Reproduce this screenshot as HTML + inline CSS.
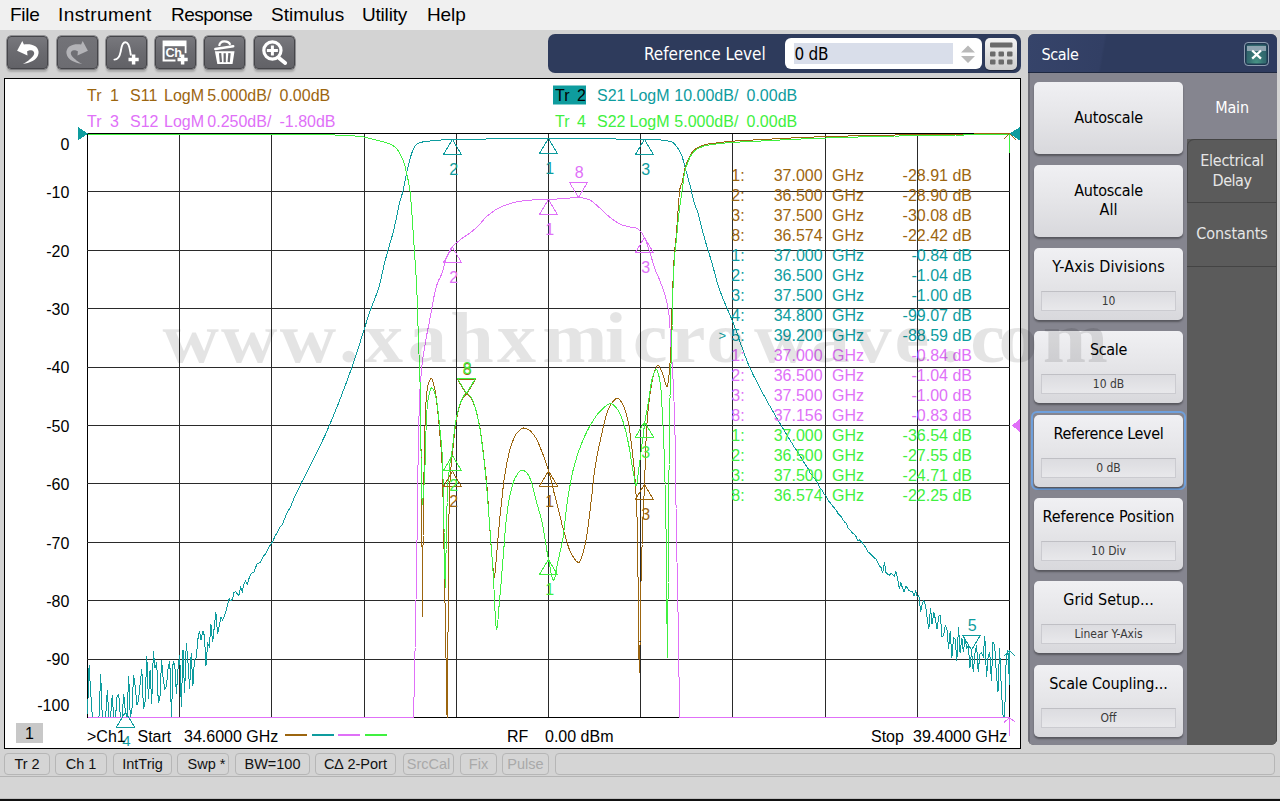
<!DOCTYPE html><html><head><meta charset="utf-8"><title>Network Analyzer</title><style>
html,body{margin:0;padding:0}
body{width:1280px;height:801px;position:relative;overflow:hidden;background:#d3d3d3;font-family:"Liberation Sans",sans-serif;color:#000}
.abs{position:absolute}
#menubar{left:0;top:0;width:1280px;height:30px;background:#f0f0f0}
#menubar span{position:absolute;top:3px;font-size:19px;line-height:24px;white-space:nowrap}
#toolbar{left:0;top:30px;width:1280px;height:48px;background:#d3d3d3}
.tb{position:absolute;top:36px;width:39px;height:31px;border:1px solid #454549;border-radius:4px;background:linear-gradient(#78787d,#6a6a6f 50%,#626267);box-shadow:0 0 0 .5px #55555a,0 3px 2px rgba(0,0,0,.2)}
.tb svg{position:absolute;left:0;top:0}
#refbar{left:548px;top:34px;width:473px;height:39px;border-radius:7px;background:#2e3b5c}
#refbar .lbl{position:absolute;left:96px;top:8.4px;font-family:"DejaVu Sans Condensed","DejaVu Sans","Liberation Sans",sans-serif;font-size:17px;line-height:24px;letter-spacing:-.03px;color:#fff;white-space:nowrap}
#refin{position:absolute;left:237px;top:4px;width:197px;height:31px;border-radius:6px;background:#fff}
#refsel{position:absolute;left:9px;top:5px;width:159px;height:21px;background:#d9deea}
#refin .v{position:absolute;left:9.5px;top:4.2px;font-family:"DejaVu Sans Condensed","DejaVu Sans","Liberation Sans",sans-serif;font-size:17px;line-height:24px;letter-spacing:-.3px;white-space:nowrap}
#keypad{position:absolute;left:437px;top:4px;width:32px;height:32px;border-radius:5px;background:linear-gradient(#f4f4f4,#cdcdcd);box-shadow:0 1px 1px rgba(0,0,0,.4)}
#plotwin{left:4px;top:78px;width:1015px;height:669px;border:1px solid #000;background:#fff}
#panel{left:1028px;top:34px;width:249px;height:711px;border-radius:6px;background:#5b5b5b;overflow:hidden}
#phead{position:absolute;left:0;top:0;width:249px;height:38px;background:linear-gradient(100deg,#36446a 0%,#323f64 30%,#2e3b5e 31%,#2e3b5e 100%);border-bottom:1px solid #1e2840}
#phead .t{position:absolute;left:13.5px;top:9px;font-family:"DejaVu Sans Condensed","DejaVu Sans","Liberation Sans",sans-serif;font-size:16px;line-height:24px;letter-spacing:-.36px;color:#fff}
#pclose{position:absolute;left:216px;top:8px;width:22.5px;height:22px;border:1px solid #8e9bb0;border-radius:4px;background:radial-gradient(ellipse at 50% 100%,#4a9a88 0%,#356f72 45%,#2b5866 100%);box-shadow:inset 0 0 0 1.5px #1f3a52;overflow:hidden}
#pclose:before{content:'';position:absolute;left:2px;top:2.5px;right:2px;height:5.5px;background:#8ea3b0}
#pclose svg{position:absolute;left:0;top:0}
#pbody{position:absolute;left:0;top:38px;width:159px;height:673px;background:#85858f;border-left:2px solid #6d6d76;box-sizing:border-box}
#tabmain{position:absolute;left:159px;top:38px;width:90px;height:67px;background:#85858f}
.tab{position:absolute;left:159px;width:90px;background:#5b5b5b;border-top:1px solid #444;border-right:1px solid #4a4a4a;box-sizing:border-box}
.tabt{position:absolute;left:159px;width:90px;text-align:center;color:#e6e6e6;font-family:"DejaVu Sans Condensed","DejaVu Sans","Liberation Sans",sans-serif;font-size:16px;line-height:20px}
.pb{position:absolute;left:6px;width:149px;height:72px;border-radius:5px;background:linear-gradient(#f0f0f3,#e6e6e9 45%,#d8d8dc);box-shadow:0 2px 2px rgba(0,0,0,.35);font-family:"DejaVu Sans Condensed","DejaVu Sans","Liberation Sans",sans-serif}
.pb .t{position:absolute;left:0;width:149px;text-align:center;font-size:16px;line-height:19px;color:#000;white-space:nowrap}
.pb .s{position:absolute;left:7px;top:43px;width:133px;height:18px;border:1px solid #cbcbd0;border-top-color:#bfbfc4;background:linear-gradient(#dcdce0,#e8e8eb);text-align:center;font-size:12px;line-height:19px;color:#3a3a3a}
#focus{position:absolute;left:3px;top:377px;width:151px;height:75px;border:2px solid #6fa0dc;border-radius:6px}
.sb{position:absolute;top:753px;height:20px;border:1px solid #b6b6b6;border-radius:4px;background:#d5d5d5;font-size:14.5px;line-height:21px;text-align:center;white-space:nowrap;color:#111}
.sb.d{color:#a9a9a9}
#bottom{left:0;top:776px;width:1280px;height:21px;background:#d5d5d5;border-top:1px solid #b4b4b4;border-bottom:1px solid #c0c0c0}
#blk{left:0;top:799px;width:1280px;height:2px;background:#111}
#wm{left:163px;top:297px;font-family:"Liberation Serif",serif;font-weight:bold;font-size:74px;line-height:80px;color:rgba(0,0,0,.1);white-space:nowrap;letter-spacing:4.55px;pointer-events:none}
</style></head><body>
<div id="menubar" class="abs">
<span style="left:10px;letter-spacing:-0.25px">File</span>
<span style="left:58px;letter-spacing:0.40px">Instrument</span>
<span style="left:171px;letter-spacing:-0.55px">Response</span>
<span style="left:271px;letter-spacing:0.05px">Stimulus</span>
<span style="left:362px;letter-spacing:-0.20px">Utility</span>
<span style="left:427px;letter-spacing:-0.10px">Help</span>
</div>
<div id="toolbar" class="abs"></div>
<div class="tb" style="left:7px"><svg width="39" height="31" viewBox="0 0 39 31"><path d="M9.1 13.7 L14.3 3.9 L15.9 7.6 C19 7 24 7 27.7 9.6 C30 11.5 31 14.6 30.5 16.5 C30 20 27.5 22.5 24.6 24 C21.5 25.7 18 26.5 14.8 26.9 C17.5 25.5 20 24 21.5 22.4 C24 20.5 26 18.5 26.2 16.5 C26.3 14.5 25 13.3 23 13.2 C21.5 13.2 20 13.7 19.1 14.2 L19.5 18.5 Z" fill="#fff"/></svg></div>
<div class="tb" style="left:57px;background:linear-gradient(#737378,#6c6c71)"><svg width="39" height="31" viewBox="0 0 39 31"><g transform="translate(39,0) scale(-1,1)"><path d="M9.1 13.7 L14.3 3.9 L15.9 7.6 C19 7 24 7 27.7 9.6 C30 11.5 31 14.6 30.5 16.5 C30 20 27.5 22.5 24.6 24 C21.5 25.7 18 26.5 14.8 26.9 C17.5 25.5 20 24 21.5 22.4 C24 20.5 26 18.5 26.2 16.5 C26.3 14.5 25 13.3 23 13.2 C21.5 13.2 20 13.7 19.1 14.2 L19.5 18.5 Z" fill="#b3b3b7"/></g></svg></div>
<div class="tb" style="left:106px"><svg width="39" height="31" viewBox="0 0 39 31"><path d="M7.4 22.6 C11 22.6 12.6 20 13.7 14.6 C14.3 11 14.8 5.3 18.4 5.3 C22 5.3 22.8 11 23.4 15.4 L23.8 17.8" fill="none" stroke="#fff" stroke-width="1.9" stroke-linecap="round"/><path d="M26.6 17.4v10.1M21.5 22.4h10.2" stroke="#fff" stroke-width="3.5"/></svg></div>
<div class="tb" style="left:155px"><svg width="39" height="31" viewBox="0 0 39 31"><rect x="6.6" y="3.5" width="23.9" height="5.7" fill="#fff"/><path d="M7.6 9v14.4H19.5" fill="none" stroke="#fff" stroke-width="2"/><path d="M29.6 9v7.2" stroke="#fff" stroke-width="1.8"/><text x="9.4" y="20.1" font-family="Liberation Sans,sans-serif" font-weight="bold" font-size="12.6" fill="#fff" letter-spacing="-.3">Ch</text><path d="M26.6 17.4v10.1M21.5 22.4h10.2" stroke="#fff" stroke-width="3.5"/></svg></div>
<div class="tb" style="left:204px"><svg width="39" height="31" viewBox="0 0 39 31"><path d="M14.2 9 C14.6 5.6 17 4.4 19.3 4.4 C22 4.4 24.4 5.4 25.2 7.8" fill="none" stroke="#fff" stroke-width="2.2"/><path d="M10.3 12 L28.2 9.3" stroke="#fff" stroke-width="2.5" stroke-linecap="round"/><path d="M9.9 14.2 H29.5 L27.5 27.1 H12.3 Z" fill="#fff"/><path d="M15.1 16.2 L15.9 25.2 M19.7 16.2 V25.2 M24.5 16.2 L23.7 25.2" stroke="#69696e" stroke-width="2.3"/></svg></div>
<div class="tb" style="left:254px"><svg width="39" height="31" viewBox="0 0 39 31"><circle cx="17.4" cy="13.5" r="8.6" fill="none" stroke="#fff" stroke-width="3.2"/><path d="M17.4 8.4v10.2M11.9 13.5h11" stroke="#fff" stroke-width="3"/><path d="M24 21 L30.2 26" stroke="#fff" stroke-width="3.8" stroke-linecap="round"/></svg></div>
<div id="refbar" class="abs"><div class="lbl">Reference Level</div><div id="refin"><div id="refsel"></div><div class="v">0 dB</div><svg class="abs" style="left:172px;top:5px" width="22" height="22" viewBox="0 0 22 22"><path d="M4 9.5 L11 2.5 L18 9.5Z M4 13 L11 20 L18 13Z" fill="#b9b9b9"/></svg></div><div id="keypad"><svg width="32" height="32" viewBox="0 0 32 32"><g fill="#6b6b6b"><rect x="5" y="4.5" width="22.5" height="5" rx="1"/><rect x="5" y="13.5" width="5.5" height="5" rx="1"/><rect x="13.5" y="13.5" width="5.5" height="5" rx="1"/><rect x="22" y="13.5" width="5.5" height="5" rx="1"/><rect x="5" y="21.5" width="5.5" height="5" rx="1"/><rect x="13.5" y="21.5" width="5.5" height="5" rx="1"/><rect x="22" y="21.5" width="5.5" height="5" rx="1"/></g></svg></div></div>
<div id="plotwin" class="abs"></div>
<svg id="plotsvg" width="1280" height="801" viewBox="0 0 1280 801" style="position:absolute;left:0;top:0" font-family="'Liberation Sans',sans-serif" font-size="16">
<g stroke="#222" stroke-width="1" shape-rendering="crispEdges">
<line x1="87.5" y1="133.0" x2="87.5" y2="718.0" stroke="#000"/>
<line x1="179.5" y1="133.0" x2="179.5" y2="718.0" stroke="#2a2a2a"/>
<line x1="271.5" y1="133.0" x2="271.5" y2="718.0" stroke="#2a2a2a"/>
<line x1="364.5" y1="133.0" x2="364.5" y2="718.0" stroke="#2a2a2a"/>
<line x1="456.5" y1="133.0" x2="456.5" y2="718.0" stroke="#2a2a2a"/>
<line x1="548.5" y1="133.0" x2="548.5" y2="718.0" stroke="#2a2a2a"/>
<line x1="640.5" y1="133.0" x2="640.5" y2="718.0" stroke="#2a2a2a"/>
<line x1="732.5" y1="133.0" x2="732.5" y2="718.0" stroke="#2a2a2a"/>
<line x1="825.5" y1="133.0" x2="825.5" y2="718.0" stroke="#2a2a2a"/>
<line x1="917.5" y1="133.0" x2="917.5" y2="718.0" stroke="#2a2a2a"/>
<line x1="1009.5" y1="133.0" x2="1009.5" y2="718.0" stroke="#000"/>
<line x1="87.0" y1="133.5" x2="1010.0" y2="133.5" stroke="#000"/>
<line x1="87.0" y1="191.5" x2="1010.0" y2="191.5" stroke="#2a2a2a"/>
<line x1="87.0" y1="250.5" x2="1010.0" y2="250.5" stroke="#2a2a2a"/>
<line x1="87.0" y1="308.5" x2="1010.0" y2="308.5" stroke="#2a2a2a"/>
<line x1="87.0" y1="367.5" x2="1010.0" y2="367.5" stroke="#2a2a2a"/>
<line x1="87.0" y1="425.5" x2="1010.0" y2="425.5" stroke="#2a2a2a"/>
<line x1="87.0" y1="483.5" x2="1010.0" y2="483.5" stroke="#2a2a2a"/>
<line x1="87.0" y1="542.5" x2="1010.0" y2="542.5" stroke="#2a2a2a"/>
<line x1="87.0" y1="600.5" x2="1010.0" y2="600.5" stroke="#2a2a2a"/>
<line x1="87.0" y1="659.5" x2="1010.0" y2="659.5" stroke="#2a2a2a"/>
<line x1="87.0" y1="717.5" x2="1010.0" y2="717.5" stroke="#000"/>
</g>
<g fill="#000" text-anchor="end">
<text x="69.3" y="149.7">0</text>
<text x="69.3" y="198.2">-10</text>
<text x="69.3" y="256.6">-20</text>
<text x="69.3" y="315.0">-30</text>
<text x="69.3" y="373.4">-40</text>
<text x="69.3" y="431.8">-50</text>
<text x="69.3" y="490.2">-60</text>
<text x="69.3" y="548.6">-70</text>
<text x="69.3" y="607.0">-80</text>
<text x="69.3" y="665.4">-90</text>
<text x="69.3" y="711.0">-100</text>
</g>
<g shape-rendering="crispEdges">
<polyline points="87.5,134.2 88.5,134.2 89.5,134.2 90.5,134.2 91.5,134.2 92.5,134.2 93.5,134.2 94.5,134.2 95.5,134.2 96.5,134.2 97.5,134.2 98.5,134.2 99.4,134.2 100.4,134.2 101.4,134.2 102.4,134.2 103.4,134.2 104.4,134.2 105.4,134.2 106.4,134.2 107.4,134.2 108.4,134.2 109.4,134.2 110.4,134.2 111.4,134.2 112.4,134.2 113.4,134.2 114.4,134.2 115.4,134.2 116.4,134.2 117.4,134.2 118.4,134.2 119.4,134.2 120.4,134.2 121.3,134.2 122.3,134.2 123.3,134.2 124.3,134.2 125.3,134.2 126.3,134.2 127.3,134.2 128.3,134.2 129.3,134.2 130.3,134.2 131.3,134.2 132.3,134.2 133.3,134.2 134.3,134.2 135.3,134.2 136.3,134.2 137.3,134.2 138.3,134.2 139.3,134.2 140.3,134.2 141.3,134.2 142.3,134.2 143.3,134.2 144.2,134.2 145.2,134.2 146.2,134.2 147.2,134.2 148.2,134.2 149.2,134.2 150.2,134.2 151.2,134.2 152.2,134.2 153.2,134.2 154.2,134.2 155.2,134.2 156.2,134.2 157.2,134.2 158.2,134.2 159.2,134.2 160.2,134.2 161.2,134.2 162.2,134.2 163.2,134.2 164.2,134.2 165.2,134.2 166.2,134.2 167.1,134.2 168.1,134.2 169.1,134.2 170.1,134.2 171.1,134.2 172.1,134.2 173.1,134.2 174.1,134.2 175.1,134.2 176.1,134.2 177.1,134.2 178.1,134.2 179.1,134.2 180.1,134.2 181.1,134.2 182.1,134.2 183.1,134.2 184.1,134.2 185.1,134.2 186.1,134.2 187.1,134.2 188.1,134.2 189.0,134.2 190.0,134.2 191.0,134.2 192.0,134.2 193.0,134.2 194.0,134.2 195.0,134.2 196.0,134.2 197.0,134.2 198.0,134.2 199.0,134.2 200.0,134.2 201.0,134.2 202.0,134.2 203.0,134.2 204.0,134.2 205.0,134.2 206.0,134.2 207.0,134.2 208.0,134.2 209.0,134.2 210.0,134.2 211.0,134.2 212.0,134.2 213.0,134.2 214.0,134.2 215.0,134.2 216.0,134.2 217.0,134.2 218.0,134.2 219.0,134.2 220.0,134.2 221.0,134.2 222.0,134.2 223.0,134.2 224.0,134.2 225.0,134.2 226.0,134.2 227.0,134.2 228.0,134.2 229.0,134.2 230.0,134.2 231.0,134.2 232.0,134.2 233.0,134.2 234.0,134.2 235.0,134.2 236.0,134.2 237.0,134.2 238.0,134.2 239.0,134.2 240.0,134.2 241.0,134.2 242.0,134.2 243.0,134.2 244.0,134.2 245.0,134.2 246.0,134.3 247.0,134.3 248.0,134.3 249.0,134.3 250.0,134.3 251.0,134.3 252.0,134.3 253.0,134.3 254.0,134.3 255.0,134.3 256.0,134.3 257.0,134.3 258.0,134.3 259.0,134.3 260.0,134.3 261.0,134.3 262.0,134.3 263.0,134.3 264.0,134.3 265.0,134.3 266.0,134.3 267.0,134.3 268.0,134.3 269.0,134.3 270.0,134.3 271.0,134.3 272.0,134.3 273.0,134.3 274.0,134.3 275.0,134.3 276.0,134.3 277.0,134.4 278.0,134.4 279.0,134.4 280.0,134.4 281.0,134.4 282.0,134.4 283.0,134.4 284.0,134.4 285.0,134.4 286.0,134.4 287.0,134.4 288.0,134.4 289.0,134.4 290.0,134.4 291.0,134.4 292.0,134.4 293.0,134.4 294.0,134.4 295.0,134.4 296.0,134.4 297.0,134.5 298.0,134.5 299.0,134.5 300.0,134.5 301.0,134.5 302.0,134.5 303.0,134.5 304.0,134.5 305.0,134.5 306.0,134.5 307.0,134.5 308.0,134.5 309.0,134.5 310.0,134.5 311.0,134.5 312.0,134.5 313.0,134.6 314.0,134.6 315.0,134.6 316.0,134.6 317.0,134.6 318.0,134.6 319.0,134.6 320.0,134.6 321.0,134.6 322.0,134.6 323.0,134.6 324.0,134.7 325.0,134.7 326.0,134.7 327.0,134.7 328.0,134.7 329.0,134.8 330.0,134.8 331.0,134.8 332.0,134.9 333.0,134.9 334.0,134.9 335.0,135.0 336.0,135.0 337.0,135.1 338.0,135.1 339.0,135.1 340.0,135.2 341.0,135.2 342.0,135.3 343.0,135.3 344.0,135.4 345.0,135.4 346.0,135.4 347.0,135.5 348.0,135.5 349.0,135.6 350.0,135.6 351.0,135.7 352.0,135.8 353.0,135.8 354.0,135.9 355.0,136.0 356.0,136.0 357.0,136.1 358.0,136.2 359.0,136.3 360.0,136.4 361.0,136.5 362.0,136.7 363.0,136.9 364.0,137.1 365.0,137.3 366.0,137.6 367.0,137.9 368.0,138.1 369.0,138.4 370.0,138.6 371.0,138.8 372.0,139.1 373.0,139.3 374.0,139.5 375.0,139.8 376.0,140.0 377.0,140.2 378.0,140.5 379.0,140.7 380.0,141.0 381.0,141.3 382.0,141.5 383.0,141.8 384.0,142.0 385.0,142.3 386.0,142.6 387.0,142.9 388.0,143.2 389.0,143.6 390.0,144.0 391.0,144.5 392.0,145.0 393.0,145.6 394.0,146.3 395.0,147.1 396.0,148.0 397.0,149.1 398.0,150.6 399.0,152.2 400.0,154.0 401.0,155.9 402.0,157.9 403.0,160.3 404.0,163.0 404.8,165.5 405.5,168.4 406.2,171.6 407.0,175.0 407.5,177.2 408.0,179.5 408.5,181.9 409.0,184.5 409.5,187.5 410.0,191.0 410.2,193.1 410.5,195.6 410.8,198.5 411.0,201.6 411.2,204.8 411.5,208.2 411.8,211.6 412.0,215.0 412.2,217.7 412.4,220.6 412.6,223.5 412.8,226.5 413.0,229.6 413.2,232.7 413.4,235.8 413.6,238.9 413.8,242.0 414.0,245.0 414.2,248.0 414.4,251.0 414.6,253.9 414.8,256.9 415.0,259.9 415.2,262.9 415.4,265.9 415.6,269.0 415.8,271.5 415.9,273.9 416.1,276.4 416.3,279.0 416.4,281.8 416.6,285.0 416.7,287.2 416.8,289.6 416.9,292.2 417.0,294.9 417.1,297.9 417.2,300.9 417.3,304.0 417.4,307.2 417.5,310.4 417.6,313.7 417.7,316.9 417.8,320.0 417.9,323.1 418.0,326.0 418.1,328.9 418.2,331.7 418.3,334.6 418.4,337.5 418.5,340.3 418.6,343.1 418.7,346.0 418.8,348.8 418.9,351.6 419.0,354.4 419.1,357.2 419.2,360.0 419.3,362.7 419.4,365.1 419.5,367.5 419.6,369.9 419.7,372.4 419.8,375.2 419.9,378.4 420.0,382.0 420.0,383.9 420.1,386.1 420.1,388.6 420.2,391.2 420.2,394.0 420.3,397.0 420.3,400.1 420.4,403.3 420.4,406.6 420.5,409.9 420.5,413.3 420.6,416.7 420.6,420.0 420.6,422.6 420.7,425.3 420.7,428.0 420.7,430.8 420.8,433.7 420.8,436.6 420.8,439.6 420.9,442.6 420.9,445.7 421.0,448.7 421.0,451.8 421.0,454.9 421.1,457.9 421.1,461.0 421.1,464.0 421.2,467.0 421.2,470.0 421.2,472.9 421.3,475.7 421.3,478.4 421.3,481.1 421.4,483.7 421.4,486.4 421.4,489.0 421.5,491.7 421.5,494.4 421.6,497.1 421.6,500.0 421.6,503.0 421.7,506.0 421.7,509.3 421.7,512.7 421.8,516.2 421.8,520.0 421.8,522.1 421.8,524.6 421.9,527.2 421.9,530.1 421.9,533.2 421.9,536.5 421.9,539.9 421.9,543.5 422.0,547.2 422.0,551.0 422.0,554.9 422.0,558.9 422.0,562.8 422.1,566.8 422.1,570.8 422.1,574.8 422.1,578.7 422.1,582.5 422.1,586.3 422.2,589.9 422.2,593.4 422.2,596.7 422.2,599.9 422.2,602.9 422.3,605.6 422.3,608.1 422.3,610.3 422.3,612.3 422.3,613.9 422.3,615.2 422.4,616.2 422.4,616.8 422.4,617.0 422.4,616.7 422.4,616.0 422.5,614.8 422.5,613.2 422.5,611.2 422.5,608.9 422.6,606.2 422.6,603.3 422.6,600.1 422.6,596.7 422.7,593.1 422.7,589.3 422.7,585.5 422.7,581.5 422.7,577.5 422.8,573.5 422.8,569.5 422.8,565.6 422.8,561.7 422.9,558.0 422.9,554.4 422.9,551.0 422.9,547.9 423.0,544.9 423.0,542.3 423.0,540.0 423.0,536.2 423.1,532.4 423.1,528.8 423.2,525.2 423.2,521.7 423.2,518.3 423.3,515.0 423.3,511.7 423.4,508.6 423.4,505.5 423.5,502.5 423.5,499.5 423.5,496.7 423.6,493.9 423.6,491.2 423.7,488.5 423.7,486.0 423.8,483.5 423.8,481.1 423.8,478.7 423.9,476.4 423.9,474.2 424.0,472.1 424.0,470.0 424.1,466.0 424.2,462.0 424.2,458.1 424.3,454.3 424.4,450.5 424.5,446.8 424.6,443.2 424.7,439.7 424.7,436.3 424.8,433.0 424.9,429.8 425.0,426.7 425.1,423.8 425.1,421.0 425.2,418.4 425.3,415.9 425.4,413.6 425.5,411.5 425.6,409.6 425.6,407.9 425.7,406.3 425.8,405.0 426.1,400.6 426.4,396.7 426.7,393.3 427.1,390.4 427.4,388.1 427.7,386.3 428.0,385.0 428.9,382.4 429.8,380.3 430.6,379.0 431.5,378.5 432.4,379.5 433.2,382.2 434.1,385.9 435.0,390.0 435.4,391.9 435.7,394.1 436.1,396.7 436.4,399.6 436.8,402.6 437.1,405.9 437.5,409.2 437.8,412.6 438.2,416.0 438.5,418.6 438.7,421.3 439.0,424.1 439.2,427.1 439.5,430.1 439.7,433.1 440.0,436.0 440.2,438.4 440.5,440.7 440.7,442.9 440.9,445.3 441.1,447.9 441.4,450.9 441.6,454.4 441.7,456.2 441.8,458.3 441.9,460.7 442.0,463.3 442.1,466.1 442.2,469.1 442.3,472.3 442.4,475.6 442.5,479.1 442.6,482.6 442.7,486.3 442.8,490.0 442.9,492.3 442.9,494.7 443.0,497.3 443.0,500.0 443.1,502.8 443.2,505.7 443.2,508.7 443.3,511.7 443.3,514.8 443.4,518.0 443.4,521.2 443.5,524.3 443.6,527.5 443.6,530.7 443.7,533.8 443.7,537.0 443.8,540.0 443.9,542.9 443.9,545.8 444.0,548.8 444.0,551.7 444.1,554.7 444.1,557.7 444.2,560.7 444.3,563.7 444.3,566.7 444.4,569.7 444.4,572.7 444.5,575.7 444.5,578.7 444.6,581.8 444.6,584.8 444.7,587.8 444.8,590.9 444.8,593.9 444.9,596.9 444.9,600.0 445.0,603.0 445.0,606.0 445.1,609.1 445.2,612.1 445.2,615.1 445.3,618.1 445.3,621.1 445.4,624.1 445.4,627.0 445.5,630.0 445.6,633.0 445.6,636.3 445.7,639.6 445.7,643.1 445.8,646.8 445.8,650.5 445.9,654.2 446.0,658.1 446.0,661.9 446.1,665.8 446.1,669.7 446.2,673.6 446.2,677.4 446.3,681.2 446.4,684.8 446.4,688.4 446.5,691.9 446.5,695.2 446.6,698.4 446.6,701.4 446.7,704.2 446.7,706.8 446.8,709.1 446.9,711.2 446.9,713.1 447.0,714.6 447.0,715.8 447.1,716.8 447.1,717.3 447.2,717.5 447.2,717.3 447.3,716.7 447.3,715.7 447.3,714.3 447.3,712.6 447.4,710.6 447.4,708.3 447.4,705.7 447.4,702.9 447.5,699.9 447.5,696.6 447.5,693.2 447.5,689.7 447.6,686.0 447.6,682.2 447.6,678.3 447.7,674.4 447.7,670.4 447.7,666.4 447.7,662.4 447.8,658.5 447.8,654.6 447.8,650.7 447.8,647.0 447.9,643.4 447.9,640.0 447.9,637.4 447.9,634.6 448.0,631.7 448.0,628.8 448.0,625.7 448.0,622.6 448.0,619.3 448.1,616.1 448.1,612.7 448.1,609.3 448.1,605.9 448.1,602.5 448.2,599.0 448.2,595.6 448.2,592.1 448.2,588.7 448.2,585.2 448.3,581.8 448.3,578.5 448.3,575.2 448.3,572.0 448.4,568.8 448.4,565.7 448.4,562.7 448.4,559.9 448.4,557.1 448.5,554.4 448.5,551.9 448.5,549.5 448.5,547.3 448.5,545.2 448.6,543.3 448.6,541.5 448.6,540.0 448.7,535.3 448.7,530.8 448.8,526.5 448.9,522.5 448.9,518.6 449.0,514.9 449.1,511.4 449.1,508.2 449.2,505.1 449.3,502.1 449.4,499.4 449.4,496.9 449.5,494.5 449.6,492.3 449.6,490.2 449.7,488.3 449.8,486.6 449.8,485.0 449.9,483.6 450.1,479.1 450.4,475.2 450.6,471.6 450.9,468.5 451.1,465.8 451.4,463.2 451.6,460.9 451.8,458.7 452.1,456.6 452.3,454.5 452.6,452.3 452.8,450.0 453.1,446.6 453.5,443.2 453.8,439.9 454.2,436.6 454.5,433.5 454.8,430.5 455.2,427.6 455.5,425.1 455.9,422.7 456.2,420.7 456.9,417.1 457.6,413.7 458.3,410.7 458.9,408.0 459.6,405.6 460.3,403.6 461.0,402.0 461.9,400.1 462.8,398.4 463.8,396.8 464.7,395.6 465.6,394.8 466.5,394.5 467.4,394.7 468.3,395.2 469.2,396.0 470.1,397.0 471.0,398.0 471.8,399.2 472.6,400.9 473.4,402.8 474.2,405.0 474.9,407.0 475.6,409.3 476.3,411.8 477.0,414.4 477.7,417.3 478.4,420.5 479.1,423.8 479.8,427.4 480.2,429.5 480.6,431.7 480.9,434.1 481.3,436.7 481.7,439.4 482.1,442.3 482.4,445.2 482.8,448.2 483.2,451.4 483.6,454.5 483.9,457.7 484.3,461.0 484.6,463.4 484.9,465.9 485.1,468.4 485.4,470.9 485.7,473.5 486.0,476.3 486.2,479.1 486.5,482.0 486.8,485.0 487.1,488.1 487.3,491.4 487.6,494.8 487.8,497.1 487.9,499.6 488.1,502.3 488.3,505.2 488.5,508.1 488.6,511.0 488.8,514.0 489.0,516.9 489.2,519.8 489.3,522.5 489.5,525.0 489.7,528.2 490.0,531.4 490.2,534.5 490.4,537.6 490.6,540.6 490.9,543.5 491.1,546.3 491.3,549.0 491.6,551.6 491.8,554.0 492.1,557.5 492.4,561.3 492.8,565.0 493.1,568.6 493.4,571.7 493.8,574.2 494.1,575.9 494.4,576.5 494.7,575.7 495.0,573.6 495.3,570.6 495.6,567.1 495.9,563.4 496.2,560.0 496.4,557.4 496.7,554.6 496.9,551.7 497.1,548.6 497.3,545.6 497.6,542.7 497.8,540.0 498.1,536.7 498.4,533.5 498.7,530.3 499.0,527.2 499.3,524.2 499.5,521.2 499.8,518.3 500.1,515.4 500.4,512.5 500.7,509.7 501.0,507.0 501.4,503.7 501.7,500.4 502.1,497.1 502.4,493.8 502.8,490.6 503.1,487.6 503.4,484.6 503.8,481.9 504.1,479.3 504.5,477.0 505.1,473.3 505.7,469.7 506.3,466.2 506.9,463.0 507.5,459.9 508.2,457.0 508.8,454.2 509.4,451.7 510.0,449.4 510.6,447.3 511.2,445.4 512.2,442.7 513.1,440.2 514.1,437.9 515.1,435.9 516.0,434.3 517.0,433.0 517.9,431.9 518.9,430.9 519.8,430.0 520.8,429.2 521.7,428.6 522.7,428.1 523.6,428.0 524.5,428.1 525.4,428.3 526.3,428.6 527.2,429.0 528.1,429.5 529.0,430.0 530.0,430.7 530.9,431.5 531.9,432.6 532.9,433.7 533.8,435.0 534.8,436.4 535.8,438.0 536.8,439.8 537.8,441.8 538.8,444.0 539.8,446.4 540.8,448.9 541.8,451.4 542.8,454.0 543.8,456.6 544.8,459.2 545.7,461.9 546.7,464.8 547.6,467.8 548.6,471.0 549.3,473.5 550.0,476.1 550.7,478.9 551.4,481.8 552.1,484.6 552.8,487.5 553.5,490.3 554.2,493.2 555.0,496.2 555.8,499.1 556.5,502.1 557.2,505.0 558.0,508.0 558.7,510.8 559.4,513.7 560.1,516.7 560.8,519.6 561.5,522.5 562.2,525.3 562.9,528.0 563.6,530.5 564.6,533.9 565.6,537.4 566.6,540.8 567.5,544.0 568.5,547.0 569.5,549.8 570.5,552.1 571.5,554.0 572.4,555.5 573.3,557.0 574.2,558.5 575.1,559.8 576.1,560.9 577.0,561.7 577.9,562.3 578.8,562.5 579.6,561.9 580.5,560.4 581.3,558.2 582.2,555.6 583.0,553.0 583.6,551.0 584.2,548.7 584.8,546.0 585.4,543.1 586.0,540.0 586.4,537.8 586.8,535.5 587.1,532.9 587.5,530.2 587.9,527.4 588.3,524.5 588.7,521.5 589.1,518.4 589.5,515.3 589.8,512.2 590.2,509.1 590.6,506.0 590.9,503.2 591.3,500.3 591.6,497.2 592.0,494.1 592.3,491.0 592.6,487.8 593.0,484.6 593.3,481.5 593.6,478.5 594.0,475.6 594.3,472.9 594.7,470.3 595.0,468.0 595.6,464.4 596.1,461.0 596.7,457.8 597.3,454.8 597.9,451.9 598.4,449.2 599.0,446.5 599.6,443.9 600.1,441.3 600.7,438.7 601.4,435.3 602.2,431.9 602.9,428.5 603.7,425.2 604.4,422.0 605.2,419.0 605.9,416.3 606.7,413.8 607.4,411.7 608.3,409.4 609.2,407.3 610.2,405.5 611.1,403.9 612.0,402.7 612.9,401.6 613.8,400.6 614.8,399.6 615.7,398.9 616.6,398.4 617.5,398.2 618.4,398.5 619.4,399.2 620.3,400.3 621.2,401.7 622.2,403.3 623.1,405.0 623.9,406.7 624.7,408.9 625.5,411.4 626.4,414.4 627.2,417.7 628.0,421.3 628.8,425.2 629.2,427.2 629.5,429.4 629.9,431.9 630.3,434.6 630.6,437.5 631.0,440.5 631.4,443.6 631.7,446.8 632.1,450.0 632.4,452.5 632.7,455.0 633.0,457.5 633.2,460.0 633.5,462.7 633.8,465.4 634.1,468.3 634.4,471.4 634.6,474.6 634.9,478.1 635.2,481.8 635.5,485.8 635.6,487.8 635.8,489.9 635.9,492.0 636.0,494.3 636.2,496.8 636.3,499.4 636.5,502.3 636.6,505.5 636.7,509.0 636.9,512.8 637.0,517.0 637.0,518.7 637.1,520.6 637.1,522.8 637.2,525.1 637.2,527.7 637.3,530.4 637.3,533.3 637.4,536.4 637.4,539.5 637.5,542.8 637.5,546.2 637.6,549.6 637.6,553.0 637.7,556.5 637.7,560.0 637.8,563.5 637.8,566.9 637.9,570.3 637.9,573.6 638.0,576.9 638.0,580.0 638.0,583.0 638.1,586.2 638.1,589.6 638.2,593.1 638.2,596.7 638.3,600.5 638.3,604.3 638.4,608.2 638.4,612.2 638.5,616.2 638.5,620.2 638.5,624.2 638.6,628.1 638.6,632.0 638.7,635.9 638.7,639.7 638.8,643.3 638.8,646.9 638.9,650.3 638.9,653.5 638.9,656.6 639.0,659.4 639.0,662.1 639.1,664.5 639.1,666.6 639.2,668.5 639.2,670.1 639.3,671.3 639.3,672.2 639.4,672.8 639.4,673.0 639.4,672.7 639.5,672.0 639.5,670.8 639.6,669.2 639.6,667.2 639.7,664.9 639.7,662.2 639.8,659.3 639.8,656.1 639.9,652.7 639.9,649.1 640.0,645.4 640.0,641.6 640.1,637.7 640.1,633.8 640.2,629.9 640.2,626.0 640.3,622.1 640.3,618.4 640.4,614.8 640.4,611.4 640.5,608.1 640.5,605.1 640.6,602.4 640.6,600.0 640.7,596.3 640.8,592.7 640.8,589.1 640.9,585.7 641.0,582.3 641.1,579.0 641.2,575.8 641.2,572.6 641.3,569.5 641.4,566.5 641.5,563.6 641.6,560.7 641.6,557.9 641.7,555.2 641.8,552.5 641.9,549.9 642.0,547.3 642.0,544.8 642.1,542.4 642.2,540.0 642.3,536.5 642.4,533.1 642.6,529.9 642.7,526.8 642.8,523.8 642.9,520.9 643.0,518.0 643.2,515.3 643.3,512.5 643.4,509.8 643.5,507.2 643.7,504.5 643.8,501.8 643.9,499.2 644.0,496.5 644.1,493.7 644.3,490.9 644.4,488.0 644.5,485.0 644.6,482.2 644.7,479.2 644.8,476.2 644.9,473.0 645.0,469.8 645.2,466.5 645.3,463.2 645.4,459.9 645.5,456.7 645.6,453.4 645.7,450.2 645.8,447.1 645.9,444.1 646.0,441.2 646.2,438.4 646.3,435.8 646.4,433.4 646.5,431.2 646.6,429.2 646.7,427.4 647.0,423.3 647.3,419.6 647.6,416.1 647.8,412.9 648.1,409.9 648.4,407.1 648.7,404.5 649.0,402.1 649.2,399.8 649.5,397.7 649.8,395.6 650.1,393.7 650.7,390.0 651.2,386.4 651.8,383.1 652.4,380.0 652.9,377.2 653.5,374.8 654.0,372.8 654.6,371.2 655.5,369.2 656.3,367.4 657.1,366.1 658.0,365.6 658.9,366.1 659.8,367.4 660.7,369.3 661.6,371.4 662.5,373.5 663.4,376.1 664.3,379.5 665.2,382.9 666.1,385.5 667.0,386.5 667.4,385.8 667.9,383.8 668.3,380.8 668.8,377.3 669.2,373.5 669.4,371.7 669.6,369.6 669.8,367.1 669.9,364.4 670.1,361.3 670.3,358.0 670.4,355.9 670.5,353.6 670.6,351.0 670.7,348.1 670.8,345.1 670.9,342.0 671.0,338.7 671.1,335.5 671.2,332.2 671.3,329.0 671.4,325.8 671.5,322.8 671.6,320.0 671.7,316.8 671.8,313.6 671.9,310.4 672.1,307.1 672.2,303.8 672.3,300.6 672.4,297.3 672.5,294.1 672.6,290.9 672.8,287.7 672.9,284.7 673.0,281.7 673.1,278.8 673.2,276.0 673.3,273.3 673.4,270.7 673.6,268.3 673.7,266.0 673.8,263.9 673.9,262.0 674.2,258.1 674.4,254.6 674.7,251.4 674.9,248.4 675.2,245.6 675.5,243.0 675.7,240.4 676.0,237.7 676.2,234.9 676.5,232.0 676.7,229.0 677.0,225.7 677.2,222.2 677.5,218.7 677.7,215.0 678.0,211.4 678.2,207.8 678.5,204.3 678.7,200.9 679.0,197.8 679.2,195.0 679.5,192.4 679.7,190.3 680.0,188.6 680.2,187.4 681.1,185.1 682.0,183.0 682.6,180.5 683.2,177.3 683.8,173.9 684.4,170.6 685.0,168.0 686.0,164.9 687.0,162.3 688.0,160.0 689.0,157.8 690.0,155.7 691.0,153.9 692.0,152.5 693.0,151.4 694.0,150.4 695.0,149.5 696.0,148.7 697.0,148.1 698.0,147.5 699.0,147.0 700.0,146.5 701.0,146.1 702.0,145.7 703.0,145.3 704.0,145.0 705.0,144.7 706.0,144.5 707.0,144.3 708.0,144.1 709.0,143.9 710.0,143.8 711.0,143.6 712.0,143.5 713.0,143.4 714.0,143.3 715.0,143.1 716.0,143.0 717.0,142.9 718.0,142.7 719.0,142.6 720.0,142.5 721.0,142.4 722.0,142.2 723.0,142.1 724.0,142.0 725.0,141.9 726.0,141.8 727.0,141.7 728.0,141.6 729.0,141.5 730.0,141.4 731.0,141.3 732.0,141.2 733.0,141.2 734.0,141.1 735.0,141.0 736.0,140.9 737.0,140.9 738.0,140.8 739.0,140.8 740.0,140.7 741.0,140.6 742.0,140.6 743.0,140.5 744.0,140.4 745.0,140.4 746.0,140.3 747.0,140.3 748.0,140.2 749.0,140.2 750.0,140.1 751.0,140.1 752.0,140.0 753.0,140.0 754.0,139.9 755.0,139.9 756.0,139.8 757.0,139.8 758.0,139.7 759.0,139.7 760.0,139.6 761.0,139.5 762.0,139.5 763.0,139.4 764.0,139.4 765.0,139.3 766.0,139.3 767.0,139.2 768.0,139.2 769.0,139.1 770.0,139.1 771.0,139.0 772.0,139.0 773.0,138.9 774.0,138.9 775.0,138.8 776.0,138.8 777.0,138.7 778.0,138.6 779.0,138.6 780.0,138.5 781.0,138.5 782.0,138.4 783.0,138.4 784.0,138.3 785.0,138.3 786.0,138.2 787.0,138.2 788.0,138.1 789.0,138.1 790.0,138.0 791.0,138.0 792.0,137.9 793.0,137.9 794.0,137.8 795.0,137.8 796.0,137.7 797.0,137.7 798.0,137.7 799.0,137.6 800.0,137.6 801.0,137.5 802.0,137.5 803.0,137.4 804.0,137.4 805.0,137.3 806.0,137.3 807.0,137.3 808.0,137.2 809.0,137.2 810.0,137.1 811.0,137.1 812.0,137.1 813.0,137.0 814.0,137.0 815.0,136.9 816.0,136.9 817.0,136.9 818.0,136.8 819.0,136.8 820.0,136.8 821.0,136.7 822.0,136.7 823.0,136.7 824.0,136.6 825.0,136.6 826.0,136.6 827.0,136.5 828.0,136.5 829.0,136.5 830.0,136.5 831.0,136.4 832.0,136.4 833.0,136.4 834.0,136.3 834.9,136.3 835.9,136.3 836.9,136.3 837.9,136.2 838.9,136.2 839.9,136.2 840.9,136.1 841.9,136.1 842.9,136.1 843.9,136.1 844.9,136.0 845.9,136.0 846.9,136.0 847.9,136.0 848.9,135.9 849.9,135.9 850.9,135.9 851.9,135.9 852.8,135.8 853.8,135.8 854.8,135.8 855.8,135.8 856.8,135.7 857.8,135.7 858.8,135.7 859.8,135.7 860.8,135.7 861.8,135.6 862.8,135.6 863.8,135.6 864.8,135.6 865.8,135.5 866.8,135.5 867.8,135.5 868.8,135.5 869.8,135.5 870.8,135.4 871.7,135.4 872.7,135.4 873.7,135.4 874.7,135.3 875.7,135.3 876.7,135.3 877.7,135.3 878.7,135.3 879.7,135.2 880.7,135.2 881.7,135.2 882.7,135.2 883.7,135.2 884.7,135.1 885.7,135.1 886.7,135.1 887.7,135.1 888.7,135.1 889.7,135.1 890.6,135.0 891.6,135.0 892.6,135.0 893.6,135.0 894.6,135.0 895.6,134.9 896.6,134.9 897.6,134.9 898.6,134.9 899.6,134.9 900.6,134.9 901.6,134.8 902.6,134.8 903.6,134.8 904.6,134.8 905.6,134.8 906.6,134.8 907.6,134.8 908.5,134.7 909.5,134.7 910.5,134.7 911.5,134.7 912.5,134.7 913.5,134.7 914.5,134.6 915.5,134.6 916.5,134.6 917.5,134.6 918.5,134.6 919.5,134.6 920.5,134.6 921.5,134.5 922.5,134.5 923.5,134.5 924.5,134.5 925.5,134.5 926.5,134.5 927.5,134.5 928.5,134.4 929.5,134.4 930.5,134.4 931.5,134.4 932.5,134.4 933.5,134.4 934.5,134.4 935.5,134.4 936.5,134.4 937.5,134.3 938.5,134.3 939.5,134.3 940.5,134.3 941.5,134.3 942.5,134.3 943.5,134.3 944.5,134.3 945.5,134.2 946.5,134.2 947.5,134.2 948.5,134.2 949.5,134.2 950.5,134.2 951.5,134.2 952.5,134.2 953.5,134.2 954.5,134.2 955.5,134.1 956.5,134.1 957.5,134.1 958.5,134.1 959.5,134.1 960.5,134.1 961.5,134.1 962.5,134.1 963.5,134.1 964.5,134.0 965.5,134.0 966.5,134.0 967.5,134.0 968.5,134.0 969.5,134.0 970.5,134.0 971.5,134.0 972.5,134.0 973.5,134.0 974.5,134.0 975.5,133.9 976.5,133.9 977.5,133.9 978.5,133.9 979.5,133.9 980.5,133.9 981.5,133.9 982.5,133.9 983.5,133.9 984.5,133.9 985.5,133.8 986.5,133.8 987.5,133.8 988.5,133.8 989.5,133.8 990.5,133.8 991.5,133.8 992.5,133.8 993.5,133.8 994.5,133.8 995.5,133.7 996.5,133.7 997.5,133.7 998.5,133.7 999.5,133.7 1000.5,133.7 1001.5,133.7 1002.5,133.7 1003.5,133.7 1004.5,133.7 1005.5,133.6 1006.5,133.6 1007.5,133.6 1008.5,133.6 1009.5,133.6" fill="none" stroke="#9c650f" stroke-width="1"/>
<polyline points="87.5,714.3 89.1,665.1 90.8,693.9 92.4,717.5 94.1,717.5 95.7,717.5 97.4,717.5 99.0,716.3 100.7,673.7 102.3,717.5 104.0,717.5 105.6,717.5 107.3,690.4 108.9,717.5 110.5,717.5 112.2,695.5 113.8,717.5 115.5,717.5 117.1,695.9 118.8,694.6 120.4,717.5 122.1,717.5 123.7,693.6 125.4,712.1 127.0,717.5 128.7,675.7 130.3,717.5 132.0,708.3 133.6,675.4 135.2,686.1 136.9,705.0 138.5,700.8 140.2,683.2 141.8,669.2 143.5,709.4 145.1,701.5 146.8,656.1 148.4,699.3 150.1,669.8 151.7,704.2 153.4,650.9 155.0,668.3 156.7,662.1 158.3,702.7 159.9,698.3 161.6,660.3 163.2,679.5 164.9,688.8 166.5,686.3 168.2,666.6 169.8,661.5 171.5,717.5 173.1,661.7 174.8,664.7 176.4,694.2 178.1,667.5 179.7,655.3 181.3,706.6 183.0,649.7 184.6,693.4 186.3,643.0 187.9,660.9 189.6,688.9 191.2,652.9 192.9,685.7 194.5,659.4 196.2,658.1 197.8,639.6 199.5,630.6 201.1,640.2 202.8,630.8 204.4,635.7 206.0,665.5 207.7,643.6 209.3,646.5 211.0,624.5 212.6,642.4 214.3,626.9 215.9,612.2 217.6,634.3 219.2,625.9 220.9,617.4 222.5,619.7 224.2,616.5 225.8,612.2 227.4,605.5 229.1,598.8 230.7,600.7 232.4,599.4 234.0,592.6 235.7,591.4 237.3,593.8 239.0,595.3 240.6,587.5 242.3,591.8 243.9,584.3 245.6,580.7 247.2,584.4 248.8,579.2 250.5,574.5 252.1,572.8 253.8,572.8 255.4,568.1 257.1,563.6 258.7,563.5 260.4,562.1 262.0,558.8 263.7,555.7 265.3,554.5 267.0,551.1 268.6,547.7 270.3,545.2 271.9,542.8 273.5,539.8 275.2,535.3 276.8,533.7 278.5,530.3 280.1,527.0 281.8,525.5 283.4,521.8 285.1,517.4 286.7,513.6 288.4,510.5 290.0,508.1 291.7,503.9 293.3,500.0 294.9,496.1 296.6,492.4 298.2,489.7 299.9,486.7 301.5,482.5 303.2,479.3 304.8,476.5 306.5,472.7 308.1,469.7 309.8,466.2 311.4,463.6 313.1,459.5 314.7,456.4 316.4,453.0 318.0,449.9 319.6,446.5 321.3,443.3 322.9,439.7 324.6,436.5 326.2,432.5 327.9,428.9 329.5,424.8 331.2,421.0 332.8,417.2 334.5,413.2 336.1,409.1 337.8,405.1 339.4,400.8 341.1,396.8 342.7,392.3 344.3,387.9 346.0,383.5 347.6,379.0 349.3,374.6 350.9,370.0 352.6,365.4 354.2,360.7 355.9,355.6 357.5,350.5 359.2,345.3 360.8,340.1 362.5,334.9 364.1,329.6 365.7,324.4 367.4,319.2 369.0,314.3 370.7,309.4 372.3,304.9 374.0,300.7 375.6,296.6 377.3,292.2 378.9,287.3 380.6,281.1 382.2,273.3 383.9,265.6 385.5,259.3 387.1,253.5 388.8,247.7 390.4,241.9 392.1,236.2 393.7,230.0 395.4,222.8 397.0,214.7 398.7,206.7 400.3,199.9 402.0,194.6 403.6,188.3 405.3,179.8 406.9,171.4 408.6,164.4 410.2,158.3 411.8,153.0 413.5,149.0 415.1,146.1 416.8,144.3 418.4,143.3 420.1,142.6 421.7,142.2 423.4,141.8 425.0,141.6 426.7,141.4 428.3,141.2 430.0,141.0 431.6,140.8 433.2,140.7 434.9,140.5 436.5,140.4 438.2,140.3 439.8,140.1 441.5,140.0 443.1,139.9 444.8,139.8 446.4,139.7 448.1,139.7 449.7,139.6 451.4,139.6 453.0,139.5 454.7,139.5 456.3,139.4 457.9,139.4 459.6,139.4 461.2,139.3 462.9,139.3 464.5,139.3 466.2,139.2 467.8,139.2 469.5,139.2 471.1,139.1 472.8,139.1 474.4,139.1 476.1,139.1 477.7,139.1 479.4,139.0 481.0,139.0 482.6,139.0 484.3,139.0 485.9,139.0 487.6,138.9 489.2,138.9 490.9,138.9 492.5,138.9 494.2,138.9 495.8,138.8 497.5,138.8 499.1,138.8 500.8,138.8 502.4,138.8 504.0,138.8 505.7,138.7 507.3,138.7 509.0,138.7 510.6,138.7 512.3,138.7 513.9,138.6 515.6,138.6 517.2,138.6 518.9,138.6 520.5,138.6 522.2,138.6 523.8,138.5 525.5,138.5 527.1,138.5 528.7,138.5 530.4,138.5 532.0,138.5 533.7,138.5 535.3,138.4 537.0,138.4 538.6,138.4 540.3,138.4 541.9,138.4 543.6,138.4 545.2,138.4 546.9,138.4 548.5,138.4 550.1,138.4 551.8,138.4 553.4,138.4 555.1,138.4 556.7,138.4 558.4,138.4 560.0,138.4 561.7,138.4 563.3,138.4 565.0,138.5 566.6,138.5 568.3,138.5 569.9,138.5 571.5,138.5 573.2,138.5 574.8,138.5 576.5,138.6 578.1,138.6 579.8,138.6 581.4,138.6 583.1,138.6 584.7,138.6 586.4,138.7 588.0,138.7 589.7,138.7 591.3,138.7 593.0,138.7 594.6,138.7 596.2,138.8 597.9,138.8 599.5,138.8 601.2,138.8 602.8,138.8 604.5,138.8 606.1,138.9 607.8,138.9 609.4,138.9 611.1,138.9 612.7,138.9 614.4,138.9 616.0,139.0 617.6,139.0 619.3,139.0 620.9,139.0 622.6,139.0 624.2,139.0 625.9,139.1 627.5,139.1 629.2,139.1 630.8,139.1 632.5,139.1 634.1,139.2 635.8,139.2 637.4,139.2 639.1,139.2 640.7,139.3 642.3,139.3 644.0,139.3 645.6,139.4 647.3,139.4 648.9,139.5 650.6,139.5 652.2,139.5 653.9,139.6 655.5,139.7 657.2,139.7 658.8,139.8 660.5,140.0 662.1,140.1 663.8,140.3 665.4,140.5 667.0,140.8 668.7,141.1 670.3,141.6 672.0,142.1 673.6,143.0 675.3,144.7 676.9,146.9 678.6,149.3 680.2,152.1 681.9,155.7 683.5,161.1 685.2,167.6 686.8,173.6 688.4,179.6 690.1,185.5 691.7,192.2 693.4,199.7 695.0,205.1 696.7,209.3 698.3,214.1 700.0,220.6 701.6,227.5 703.3,233.7 704.9,239.7 706.6,245.5 708.2,250.9 709.9,256.1 711.5,261.3 713.1,267.1 714.8,273.4 716.4,279.7 718.1,285.3 719.7,290.1 721.4,294.5 723.0,298.8 724.7,302.8 726.3,306.6 728.0,310.5 729.6,314.3 731.3,318.2 732.9,322.2 734.5,326.4 736.2,330.9 737.8,335.5 739.5,340.2 741.1,344.9 742.8,349.5 744.4,354.0 746.1,358.6 747.7,362.7 749.4,366.7 751.0,370.3 752.7,373.8 754.3,377.1 756.0,380.1 757.6,383.4 759.2,386.6 760.9,389.6 762.5,392.8 764.2,395.8 765.8,398.8 767.5,401.7 769.1,404.8 770.8,407.7 772.4,410.6 774.1,413.3 775.7,416.4 777.4,419.2 779.0,421.9 780.6,424.6 782.3,427.2 783.9,430.1 785.6,432.9 787.2,435.2 788.9,438.2 790.5,441.0 792.2,443.4 793.8,446.4 795.5,448.7 797.1,451.1 798.8,453.9 800.4,456.7 802.0,459.0 803.7,461.9 805.3,464.6 807.0,467.1 808.6,469.4 810.3,473.3 811.9,474.8 813.6,477.8 815.2,479.5 816.9,481.9 818.5,485.4 820.2,488.3 821.8,489.6 823.5,493.2 825.1,495.1 826.7,497.1 828.4,500.7 830.0,502.6 831.7,504.7 833.3,506.7 835.0,508.7 836.6,510.7 838.3,514.1 839.9,515.5 841.6,516.8 843.2,520.2 844.9,522.3 846.5,523.7 848.1,528.1 849.8,529.6 851.4,531.7 853.1,533.7 854.7,534.4 856.4,537.2 858.0,541.2 859.7,539.8 861.3,541.8 863.0,543.8 864.6,545.8 866.3,548.2 867.9,551.9 869.6,552.9 871.2,554.8 872.8,556.3 874.5,558.2 876.1,559.3 877.8,562.4 879.4,566.2 881.1,567.4 882.7,573.1 884.4,562.3 886.0,572.6 887.7,574.4 889.3,575.3 891.0,573.3 892.6,574.8 894.2,576.2 895.9,571.8 897.5,577.9 899.2,588.6 900.8,582.9 902.5,587.9 904.1,591.9 905.8,586.3 907.4,587.7 909.1,590.7 910.7,591.1 912.4,591.7 914.0,595.5 915.7,591.0 917.3,596.8 918.9,595.8 920.6,611.7 922.2,603.8 923.9,600.8 925.5,605.1 927.2,618.3 928.8,629.3 930.5,608.0 932.1,624.3 933.8,612.1 935.4,619.2 937.1,629.0 938.7,616.0 940.4,615.9 942.0,637.0 943.6,635.3 945.3,625.4 946.9,628.5 948.6,648.9 950.2,631.5 951.9,657.6 953.5,637.5 955.2,639.5 956.8,660.9 958.5,627.0 960.1,653.0 961.8,637.7 963.4,652.1 965.0,639.3 966.7,647.8 968.3,646.5 970.0,667.5 971.6,650.9 973.3,672.3 974.9,653.5 976.6,645.4 978.2,672.3 979.9,654.0 981.5,652.7 983.2,656.3 984.8,635.9 986.5,677.4 988.1,656.4 989.7,651.7 991.4,680.7 993.0,642.2 994.7,645.5 996.3,673.4 998.0,692.1 999.6,648.4 1001.3,688.3 1002.9,714.5 1004.6,717.5 1006.2,658.7 1007.9,649.9 1009.5,684.8" fill="none" stroke="#0e9c9e" stroke-width="1"/>
<polyline points="87.5,717.5 413.4,717.5 413.6,717.5 413.7,714.6 413.7,711.7 413.8,708.8 413.8,705.9 413.9,703.0 413.9,700.0 414.0,697.1 414.1,694.2 414.1,691.3 414.2,688.4 414.2,685.6 414.3,682.7 414.3,679.8 414.4,677.0 414.5,674.0 414.5,671.0 414.6,668.0 414.6,665.1 414.7,662.2 414.8,659.3 414.8,656.4 414.9,653.6 415.0,650.7 415.0,647.9 415.1,645.1 415.1,642.2 415.2,639.4 415.3,636.5 415.3,633.6 415.4,630.8 415.4,627.8 415.5,624.9 415.6,621.9 415.6,618.9 415.7,615.9 415.8,612.8 415.8,609.7 415.9,606.5 415.9,603.3 416.0,600.0 416.1,597.3 416.1,594.6 416.1,591.8 416.2,589.0 416.2,586.2 416.3,583.3 416.4,580.4 416.4,577.5 416.4,574.6 416.5,571.6 416.6,568.6 416.6,565.5 416.6,562.4 416.7,559.3 416.8,556.2 416.8,553.0 416.9,549.8 416.9,546.6 416.9,543.3 417.0,540.0 417.0,537.3 417.1,534.5 417.1,531.6 417.2,528.6 417.2,525.5 417.2,522.4 417.3,519.2 417.3,516.0 417.4,512.7 417.4,509.4 417.4,506.1 417.5,502.7 417.5,499.4 417.6,496.0 417.6,492.7 417.6,489.4 417.7,486.1 417.7,482.9 417.8,479.7 417.8,476.5 417.8,473.4 417.9,470.4 417.9,467.5 418.0,464.7 418.0,461.9 418.0,459.3 418.1,456.8 418.1,454.4 418.2,452.1 418.2,450.0 418.3,446.1 418.4,442.4 418.4,438.7 418.5,435.1 418.6,431.6 418.7,428.2 418.7,424.9 418.8,421.8 418.9,418.8 419.0,415.9 419.0,413.1 419.1,410.5 419.2,408.1 419.3,405.8 419.3,403.7 419.4,401.8 419.5,400.0 419.7,395.6 419.9,391.6 420.1,387.9 420.3,384.5 420.5,381.4 420.8,378.5 421.0,375.9 421.2,373.5 421.4,371.2 421.6,369.0 421.8,367.0 422.2,363.4 422.6,360.2 423.0,357.3 423.4,354.6 423.8,352.1 424.2,349.7 424.6,347.4 425.0,345.0 425.5,341.8 426.1,338.8 426.6,335.9 427.1,333.0 427.7,330.2 428.2,327.5 428.8,324.8 429.3,322.0 429.9,319.0 430.5,315.8 431.0,312.7 431.6,309.5 432.2,306.3 432.8,303.1 433.3,300.0 433.9,297.1 434.5,294.2 435.1,291.6 435.6,289.1 436.2,286.9 436.8,285.0 437.7,282.6 438.5,280.6 439.4,278.8 440.3,277.1 441.1,275.2 442.0,273.0 442.8,270.5 443.6,267.5 444.4,264.4 445.2,261.5 446.0,259.0 447.0,256.4 448.0,253.9 449.0,251.8 450.0,250.0 451.0,248.5 452.0,247.2 453.0,246.1 454.0,245.0 455.0,244.0 456.0,243.2 457.0,242.3 458.0,241.5 459.0,240.8 460.0,240.0 461.0,239.2 462.0,238.5 463.0,237.7 464.0,237.0 465.0,236.3 466.0,235.7 467.0,235.0 468.0,234.4 469.0,233.7 470.0,233.0 471.0,232.2 472.0,231.4 473.0,230.6 474.0,229.7 475.0,228.8 476.0,227.9 477.0,227.0 478.0,226.0 478.9,225.1 479.9,224.1 480.8,223.0 481.7,221.9 482.6,220.8 483.6,219.8 484.5,218.7 485.4,217.7 486.4,216.8 487.3,216.0 488.3,215.2 489.3,214.4 490.3,213.6 491.3,212.8 492.3,212.1 493.3,211.4 494.3,210.7 495.3,210.0 496.3,209.4 497.3,208.8 498.3,208.2 499.3,207.7 500.3,207.2 501.3,206.7 502.3,206.3 503.3,205.9 504.3,205.5 505.3,205.1 506.3,204.8 507.3,204.4 508.3,204.1 509.3,203.8 510.3,203.5 511.3,203.2 512.3,202.9 513.3,202.6 514.3,202.4 515.3,202.2 516.3,202.0 517.3,201.8 518.3,201.6 519.3,201.5 520.3,201.3 521.3,201.2 522.3,201.0 523.3,200.9 524.3,200.7 525.3,200.6 526.3,200.5 527.3,200.4 528.3,200.3 529.3,200.2 530.3,200.1 531.3,200.1 532.3,200.0 533.2,199.9 534.2,199.9 535.1,199.9 536.1,199.8 537.0,199.8 538.0,199.7 538.9,199.7 539.9,199.7 540.8,199.7 541.8,199.6 542.7,199.6 543.7,199.6 544.6,199.5 545.6,199.5 546.5,199.5 547.5,199.4 548.4,199.4 549.4,199.4 550.4,199.3 551.4,199.3 552.3,199.2 553.3,199.2 554.3,199.1 555.3,199.1 556.3,199.0 557.3,199.0 558.3,198.9 559.2,198.9 560.2,198.8 561.2,198.8 562.2,198.7 563.2,198.6 564.1,198.6 565.1,198.5 566.0,198.4 567.0,198.3 567.9,198.2 568.9,198.1 569.8,198.0 570.8,197.9 571.7,197.8 572.7,197.8 573.6,197.7 574.6,197.6 575.5,197.6 576.5,197.5 577.4,197.5 578.4,197.5 579.3,197.5 580.2,197.6 581.2,197.7 582.1,197.8 583.0,198.0 583.9,198.2 584.8,198.4 585.7,198.6 586.7,198.9 587.6,199.1 588.5,199.4 589.4,199.7 590.4,200.2 591.3,200.8 592.2,201.4 593.2,202.2 594.1,203.0 595.0,203.8 596.0,204.6 596.9,205.5 597.8,206.4 598.8,207.2 599.7,208.0 600.6,208.8 601.6,209.6 602.5,210.5 603.4,211.4 604.4,212.3 605.3,213.2 606.2,214.1 607.2,215.0 608.1,215.8 609.0,216.6 610.0,217.4 610.9,218.1 611.8,218.8 612.8,219.5 613.7,220.1 614.7,220.8 615.6,221.5 616.5,222.1 617.5,222.7 618.4,223.2 619.4,223.7 620.3,224.2 621.3,224.6 622.2,225.0 623.2,225.3 624.2,225.6 625.1,225.9 626.1,226.1 627.1,226.4 628.0,226.6 629.0,226.8 630.0,227.0 631.0,227.2 632.0,227.3 633.0,227.4 634.0,227.6 635.0,227.8 636.0,228.0 637.0,228.4 638.0,229.1 639.0,229.9 640.0,230.9 641.0,232.0 642.0,233.3 643.0,235.0 644.0,236.9 645.0,239.0 646.0,241.3 647.0,244.0 648.0,246.9 649.0,250.0 650.0,253.0 650.8,255.6 651.7,258.3 652.5,261.2 653.3,263.9 654.2,266.6 655.0,269.0 655.9,271.4 656.8,273.5 657.8,275.6 658.7,277.7 659.6,280.0 660.5,282.4 661.5,284.8 662.4,287.2 663.3,289.9 664.3,292.8 665.2,296.0 665.7,298.0 666.3,300.0 666.8,302.2 667.4,304.7 667.9,307.6 668.5,311.0 669.0,315.0 669.2,316.8 669.4,319.1 669.6,321.9 669.8,324.9 670.0,328.2 670.1,331.7 670.3,335.1 670.5,338.6 670.7,341.9 670.9,345.0 671.1,347.9 671.3,350.6 671.5,353.3 671.7,355.9 671.8,358.6 672.0,361.5 672.2,364.4 672.4,367.6 672.6,371.0 672.7,373.2 672.8,375.4 672.9,377.6 673.1,379.9 673.2,382.3 673.3,384.7 673.4,387.1 673.5,389.7 673.6,392.4 673.8,395.1 673.9,398.0 674.0,401.1 674.1,404.2 674.2,407.6 674.3,411.1 674.5,414.7 674.6,418.6 674.7,422.7 674.8,427.0 674.8,428.8 674.9,430.8 674.9,433.0 675.0,435.3 675.0,437.7 675.1,440.3 675.1,443.0 675.2,445.9 675.2,448.8 675.3,451.8 675.3,455.0 675.3,458.2 675.4,461.4 675.4,464.8 675.5,468.1 675.5,471.5 675.6,475.0 675.6,478.4 675.7,481.9 675.7,485.3 675.7,488.7 675.8,492.1 675.8,495.5 675.9,498.8 675.9,502.1 676.0,505.3 676.0,508.4 676.1,511.5 676.1,514.4 676.2,517.3 676.2,520.0 676.3,523.3 676.3,526.6 676.4,529.8 676.4,533.0 676.5,536.1 676.5,539.1 676.6,542.1 676.7,545.1 676.7,548.0 676.8,550.9 676.8,553.8 676.9,556.6 676.9,559.4 677.0,562.2 677.1,565.0 677.1,567.8 677.2,570.6 677.2,573.4 677.3,576.2 677.3,579.0 677.4,581.8 677.5,584.6 677.5,587.5 677.6,590.4 677.6,593.3 677.7,596.2 677.7,599.2 677.8,602.2 677.9,605.3 677.9,608.4 678.0,611.6 678.0,614.9 678.1,618.2 678.1,621.5 678.2,625.0 678.2,627.6 678.3,630.2 678.3,632.9 678.4,635.7 678.4,638.4 678.5,641.3 678.5,644.1 678.5,647.0 678.6,649.9 678.6,652.9 678.7,655.9 678.7,658.9 678.7,661.9 678.8,665.0 678.8,668.1 678.9,671.2 678.9,674.3 679.0,677.4 679.0,680.5 679.0,683.6 679.1,686.7 679.1,689.9 679.2,693.0 679.2,696.1 679.2,699.2 679.3,702.3 679.3,705.4 679.4,708.4 679.4,711.5 679.5,714.5 679.5,717.5 1009.5,717.5" fill="none" stroke="#e070f8" stroke-width="1"/>
<polyline points="87.5,134.2 88.5,134.2 89.5,134.2 90.5,134.2 91.5,134.2 92.5,134.2 93.5,134.2 94.5,134.2 95.5,134.2 96.5,134.2 97.5,134.2 98.5,134.2 99.4,134.2 100.4,134.2 101.4,134.2 102.4,134.2 103.4,134.2 104.4,134.2 105.4,134.2 106.4,134.2 107.4,134.2 108.4,134.2 109.4,134.2 110.4,134.2 111.4,134.2 112.4,134.2 113.4,134.2 114.4,134.2 115.4,134.2 116.4,134.2 117.4,134.2 118.4,134.2 119.4,134.2 120.4,134.2 121.3,134.2 122.3,134.2 123.3,134.2 124.3,134.2 125.3,134.2 126.3,134.2 127.3,134.2 128.3,134.2 129.3,134.2 130.3,134.2 131.3,134.2 132.3,134.2 133.3,134.2 134.3,134.2 135.3,134.2 136.3,134.2 137.3,134.2 138.3,134.2 139.3,134.2 140.3,134.2 141.3,134.2 142.3,134.2 143.3,134.2 144.2,134.2 145.2,134.2 146.2,134.2 147.2,134.2 148.2,134.2 149.2,134.2 150.2,134.2 151.2,134.2 152.2,134.2 153.2,134.2 154.2,134.2 155.2,134.2 156.2,134.2 157.2,134.2 158.2,134.2 159.2,134.2 160.2,134.2 161.2,134.2 162.2,134.2 163.2,134.2 164.2,134.2 165.2,134.2 166.2,134.2 167.1,134.2 168.1,134.2 169.1,134.2 170.1,134.2 171.1,134.2 172.1,134.2 173.1,134.2 174.1,134.2 175.1,134.2 176.1,134.2 177.1,134.2 178.1,134.2 179.1,134.2 180.1,134.2 181.1,134.2 182.1,134.2 183.1,134.2 184.1,134.2 185.1,134.2 186.1,134.2 187.1,134.2 188.1,134.2 189.0,134.2 190.0,134.2 191.0,134.2 192.0,134.2 193.0,134.2 194.0,134.2 195.0,134.2 196.0,134.2 197.0,134.2 198.0,134.2 199.0,134.2 200.0,134.2 201.0,134.2 202.0,134.2 203.0,134.2 204.0,134.2 205.0,134.2 206.0,134.2 207.0,134.2 208.0,134.2 209.0,134.2 210.0,134.2 211.0,134.2 212.0,134.2 213.0,134.2 214.0,134.2 215.0,134.2 216.0,134.2 217.0,134.2 218.0,134.2 219.0,134.2 220.0,134.2 221.0,134.2 222.0,134.2 223.0,134.2 224.0,134.2 225.0,134.2 226.0,134.2 227.0,134.2 228.0,134.2 229.0,134.2 230.0,134.2 231.0,134.2 232.0,134.2 233.0,134.2 234.0,134.2 235.0,134.2 236.0,134.2 237.0,134.2 238.0,134.2 239.0,134.2 240.0,134.2 241.0,134.2 242.0,134.2 243.0,134.2 244.0,134.2 245.0,134.2 246.0,134.3 247.0,134.3 248.0,134.3 249.0,134.3 250.0,134.3 251.0,134.3 252.0,134.3 253.0,134.3 254.0,134.3 255.0,134.3 256.0,134.3 257.0,134.3 258.0,134.3 259.0,134.3 260.0,134.3 261.0,134.3 262.0,134.3 263.0,134.3 264.0,134.3 265.0,134.3 266.0,134.3 267.0,134.3 268.0,134.3 269.0,134.3 270.0,134.3 271.0,134.3 272.0,134.3 273.0,134.3 274.0,134.3 275.0,134.3 276.0,134.3 277.0,134.4 278.0,134.4 279.0,134.4 280.0,134.4 281.0,134.4 282.0,134.4 283.0,134.4 284.0,134.4 285.0,134.4 286.0,134.4 287.0,134.4 288.0,134.4 289.0,134.4 290.0,134.4 291.0,134.4 292.0,134.4 293.0,134.4 294.0,134.4 295.0,134.4 296.0,134.4 297.0,134.5 298.0,134.5 299.0,134.5 300.0,134.5 301.0,134.5 302.0,134.5 303.0,134.5 304.0,134.5 305.0,134.5 306.0,134.5 307.0,134.5 308.0,134.5 309.0,134.5 310.0,134.5 311.0,134.5 312.0,134.5 313.0,134.6 314.0,134.6 315.0,134.6 316.0,134.6 317.0,134.6 318.0,134.6 319.0,134.6 320.0,134.6 321.0,134.6 322.0,134.6 323.0,134.6 324.0,134.7 325.0,134.7 326.0,134.7 327.0,134.7 328.0,134.7 329.0,134.8 330.0,134.8 331.0,134.8 332.0,134.9 333.0,134.9 334.0,134.9 335.0,135.0 336.0,135.0 337.0,135.1 338.0,135.1 339.0,135.1 340.0,135.2 341.0,135.2 342.0,135.3 343.0,135.3 344.0,135.4 345.0,135.4 346.0,135.4 347.0,135.5 348.0,135.5 349.0,135.6 350.0,135.6 351.0,135.7 352.0,135.8 353.0,135.8 354.0,135.9 355.0,136.0 356.0,136.0 357.0,136.1 358.0,136.2 359.0,136.3 360.0,136.4 361.0,136.5 362.0,136.7 363.0,136.9 364.0,137.1 365.0,137.3 366.0,137.6 367.0,137.9 368.0,138.1 369.0,138.4 370.0,138.6 371.0,138.8 372.0,139.1 373.0,139.3 374.0,139.5 375.0,139.8 376.0,140.0 377.0,140.2 378.0,140.5 379.0,140.7 380.0,141.0 381.0,141.3 382.0,141.5 383.0,141.8 384.0,142.0 385.0,142.3 386.0,142.6 387.0,142.9 388.0,143.2 389.0,143.6 390.0,144.0 391.0,144.5 392.0,145.0 393.0,145.6 394.0,146.3 395.0,147.1 396.0,148.0 397.0,149.1 398.0,150.6 399.0,152.2 400.0,154.0 401.0,155.9 402.0,157.9 403.0,160.3 404.0,163.0 404.8,165.5 405.5,168.4 406.2,171.6 407.0,175.0 407.5,177.2 408.0,179.5 408.5,181.9 409.0,184.5 409.5,187.5 410.0,191.0 410.2,193.1 410.5,195.6 410.8,198.5 411.0,201.6 411.2,204.8 411.5,208.2 411.8,211.6 412.0,215.0 412.2,217.7 412.4,220.6 412.6,223.5 412.8,226.5 413.0,229.6 413.2,232.7 413.4,235.8 413.6,238.9 413.8,242.0 414.0,245.0 414.2,248.0 414.4,251.0 414.6,253.9 414.8,256.9 415.0,259.9 415.2,262.9 415.4,265.9 415.6,269.0 415.8,271.5 415.9,273.9 416.1,276.4 416.3,279.0 416.4,281.8 416.6,285.0 416.7,287.2 416.8,289.6 416.9,292.2 417.0,294.9 417.1,297.9 417.2,300.9 417.3,304.0 417.4,307.2 417.5,310.4 417.6,313.7 417.7,316.9 417.8,320.0 417.9,323.1 418.0,326.0 418.1,328.9 418.2,331.7 418.3,334.6 418.4,337.5 418.5,340.3 418.6,343.1 418.7,346.0 418.8,348.8 418.9,351.6 419.0,354.4 419.1,357.2 419.2,360.0 419.3,362.7 419.4,365.1 419.5,367.5 419.6,369.9 419.7,372.4 419.8,375.2 419.9,378.4 420.0,382.0 420.0,383.9 420.1,386.1 420.1,388.6 420.2,391.2 420.2,394.0 420.3,397.0 420.3,400.1 420.4,403.3 420.4,406.6 420.5,409.9 420.5,413.3 420.6,416.7 420.6,420.0 420.6,422.6 420.7,425.5 420.7,428.4 420.7,431.5 420.8,434.7 420.8,438.0 420.8,441.3 420.9,444.6 420.9,447.9 421.0,451.1 421.0,454.3 421.0,457.3 421.1,460.2 421.1,463.0 421.1,465.6 421.2,467.9 421.2,470.0 421.3,473.6 421.3,477.1 421.4,480.5 421.5,483.6 421.5,486.5 421.6,489.1 421.7,491.4 421.7,493.4 421.8,495.0 422.0,498.7 422.1,501.9 422.3,504.1 422.5,505.0 422.7,503.9 422.9,501.2 423.0,497.9 423.2,495.0 423.4,492.0 423.7,489.3 423.9,486.6 424.2,483.6 424.4,480.0 424.5,478.0 424.6,475.7 424.7,473.2 424.8,470.3 424.9,467.2 425.1,464.0 425.2,460.5 425.3,457.0 425.4,453.3 425.5,449.6 425.6,445.9 425.7,442.2 425.8,438.5 425.9,434.8 426.0,431.3 426.1,428.0 426.2,424.8 426.4,421.8 426.5,419.0 426.6,416.5 426.7,414.3 426.8,412.5 426.9,411.0 427.2,407.2 427.6,403.8 427.9,401.0 428.3,398.6 428.6,396.6 429.0,395.0 429.8,391.6 430.7,389.0 431.5,388.0 432.3,388.4 433.2,389.6 434.0,391.0 434.8,392.8 435.5,395.5 436.3,398.8 436.6,400.6 437.0,402.8 437.3,405.3 437.7,408.1 438.0,411.1 438.4,414.2 438.7,417.4 439.1,420.6 439.4,423.8 439.7,426.2 439.9,428.8 440.2,431.4 440.5,434.1 440.7,437.0 441.0,440.0 441.2,442.4 441.4,444.8 441.6,447.3 441.9,450.0 442.1,453.1 442.3,456.7 442.5,461.0 442.6,462.7 442.6,464.8 442.7,467.1 442.8,469.8 442.8,472.6 442.9,475.7 443.0,478.9 443.1,482.2 443.1,485.6 443.2,489.0 443.3,492.4 443.3,495.7 443.4,499.0 443.5,501.8 443.5,504.6 443.6,507.5 443.6,510.5 443.7,513.6 443.8,516.7 443.8,519.8 443.9,522.9 443.9,526.1 444.0,529.2 444.0,532.3 444.1,535.4 444.2,538.5 444.2,541.5 444.3,544.4 444.3,547.2 444.4,550.0 444.5,553.4 444.5,557.0 444.6,560.8 444.7,564.7 444.7,568.6 444.8,572.4 444.9,575.9 445.0,579.2 445.0,582.1 445.1,584.6 445.2,586.4 445.2,587.6 445.3,588.0 445.4,587.6 445.4,586.5 445.5,584.7 445.5,582.4 445.6,579.6 445.6,576.4 445.7,572.9 445.8,569.1 445.8,565.1 445.9,561.1 445.9,557.1 446.0,553.2 446.0,549.5 446.1,546.0 446.1,542.8 446.2,540.0 446.3,536.5 446.4,533.0 446.4,529.5 446.5,525.9 446.6,522.4 446.7,519.0 446.7,515.6 446.8,512.3 446.9,509.1 447.0,506.0 447.0,503.1 447.1,500.4 447.2,497.8 447.3,495.5 447.3,493.4 447.4,491.6 447.5,490.0 447.7,485.9 448.0,482.3 448.2,479.3 448.5,476.7 448.7,474.3 449.0,472.2 449.2,470.0 449.6,466.6 450.0,463.6 450.4,460.9 450.8,458.3 451.2,455.9 451.6,453.4 452.0,450.8 452.4,448.0 452.8,445.3 453.1,442.3 453.5,439.3 453.8,436.1 454.2,433.0 454.6,430.0 454.9,427.1 455.3,424.4 455.6,422.0 456.0,420.0 456.7,416.5 457.4,413.2 458.1,410.3 458.9,407.6 459.6,405.2 460.3,403.2 461.0,401.5 461.9,399.6 462.8,397.7 463.6,396.1 464.5,394.7 465.4,393.8 466.3,393.5 467.2,393.7 468.2,394.2 469.1,395.0 470.1,395.9 471.0,397.0 472.0,398.7 473.0,401.2 474.0,404.0 474.7,406.1 475.4,408.4 476.1,410.9 476.8,413.6 477.4,416.5 478.1,419.6 478.8,422.9 479.5,426.5 479.9,428.6 480.2,430.9 480.6,433.3 481.0,435.8 481.4,438.5 481.8,441.3 482.1,444.3 482.5,447.3 482.9,450.4 483.2,453.5 483.6,456.7 484.0,460.0 484.3,462.4 484.6,464.9 484.8,467.5 485.1,470.2 485.4,472.9 485.6,475.7 485.9,478.6 486.2,481.5 486.5,484.5 486.8,487.6 487.0,490.8 487.3,494.0 487.5,496.6 487.7,499.3 487.9,502.2 488.1,505.1 488.4,508.1 488.6,511.1 488.8,514.1 489.0,517.1 489.2,520.0 489.4,522.9 489.6,525.8 489.9,528.7 490.1,531.5 490.3,534.3 490.5,537.2 490.7,540.0 490.9,542.8 491.1,545.6 491.4,548.4 491.6,551.3 491.8,554.2 492.0,557.1 492.2,560.1 492.5,563.1 492.7,566.2 492.9,569.3 493.1,572.5 493.3,575.3 493.5,578.5 493.6,582.0 493.8,585.6 494.0,589.4 494.2,593.3 494.4,597.3 494.5,601.3 494.7,605.2 494.9,609.0 495.1,612.6 495.2,616.0 495.4,619.1 495.6,621.9 495.8,624.3 496.0,626.3 496.1,627.8 496.3,628.7 496.5,629.0 496.8,628.5 497.1,627.3 497.4,625.3 497.7,622.7 498.0,619.7 498.2,616.4 498.5,612.8 498.8,609.1 499.1,605.5 499.4,601.9 499.7,598.7 499.9,596.1 500.2,593.4 500.4,590.6 500.7,587.7 500.9,584.8 501.2,581.9 501.4,578.9 501.6,575.8 501.9,572.8 502.1,569.7 502.4,566.7 502.6,563.6 502.9,560.5 503.1,557.5 503.4,554.5 503.6,551.5 503.8,548.6 504.1,545.5 504.3,542.4 504.5,539.3 504.8,536.2 505.0,533.1 505.3,530.1 505.5,527.3 505.7,524.6 506.0,522.2 506.2,520.0 506.6,516.4 507.1,513.0 507.5,509.8 507.9,506.8 508.4,504.0 508.8,501.4 509.2,499.0 509.7,496.8 510.1,494.8 511.0,490.9 512.0,487.2 512.9,483.9 513.8,481.1 514.8,478.7 515.7,476.9 516.6,475.4 517.5,474.0 518.4,472.7 519.3,471.6 520.2,470.8 521.1,470.2 522.0,470.0 523.0,470.2 524.0,470.6 525.0,471.3 526.0,472.0 526.9,472.9 527.7,474.1 528.6,475.5 529.4,477.2 530.3,479.1 531.0,481.0 531.8,483.3 532.5,485.9 533.3,488.8 534.0,491.8 534.8,494.9 535.5,498.0 536.3,501.0 537.0,503.8 537.8,506.5 538.5,509.0 539.3,511.5 540.1,514.1 540.8,516.9 541.6,520.0 542.1,522.3 542.6,524.8 543.1,527.5 543.6,530.4 544.1,533.4 544.6,536.5 545.1,539.6 545.6,542.8 546.1,545.9 546.6,549.0 547.1,552.0 547.6,554.8 548.1,557.5 548.6,560.0 549.3,563.5 550.0,567.3 550.7,571.1 551.4,574.6 552.1,577.4 552.8,579.3 553.5,580.0 554.2,579.2 554.9,577.1 555.6,574.0 556.3,570.3 557.0,566.3 557.7,562.4 558.4,559.0 559.1,556.2 559.7,553.5 560.4,550.8 561.0,548.0 561.7,545.0 562.3,541.7 563.0,538.0 563.3,535.8 563.7,533.3 564.0,530.5 564.3,527.6 564.7,524.5 565.0,521.3 565.3,518.0 565.7,514.9 566.0,511.8 566.3,508.9 566.7,506.2 567.0,503.8 567.6,500.1 568.1,496.5 568.7,493.1 569.2,489.8 569.8,486.6 570.4,483.5 570.9,480.6 571.5,477.7 572.0,475.1 572.6,472.5 573.1,470.1 573.7,467.9 574.7,464.1 575.7,460.6 576.7,457.3 577.7,454.2 578.7,451.3 579.7,448.5 580.7,445.9 581.7,443.3 582.7,440.9 583.7,438.5 584.7,436.3 585.7,434.1 586.7,432.0 587.7,430.0 588.7,428.1 589.7,426.3 590.7,424.6 591.7,422.9 592.7,421.3 593.7,419.7 594.7,418.2 595.7,416.7 596.7,415.2 597.7,413.9 598.7,412.7 599.7,411.6 600.7,410.6 601.6,409.8 602.5,408.9 603.5,408.0 604.4,407.2 605.3,406.4 606.2,405.7 607.1,405.1 608.0,404.5 609.0,404.1 609.9,403.9 610.8,403.8 611.8,404.0 612.7,404.4 613.7,405.1 614.6,406.0 615.6,407.1 616.5,408.2 617.5,409.4 618.4,410.7 619.4,412.4 620.3,414.4 621.2,416.7 622.2,419.2 623.1,421.8 623.8,424.0 624.5,426.5 625.2,429.2 626.0,432.1 626.7,435.3 627.4,438.5 628.1,441.9 628.8,445.4 629.3,448.0 629.8,450.9 630.3,454.0 630.8,457.2 631.3,460.4 631.8,463.6 632.3,466.7 632.8,469.7 633.3,472.4 633.9,475.7 634.5,479.3 635.0,482.5 635.6,484.9 636.2,485.8 636.7,484.9 637.1,482.6 637.5,479.2 638.0,475.4 638.5,471.4 638.9,467.9 639.3,465.3 639.6,462.6 640.0,459.9 640.4,457.2 640.7,454.4 641.1,451.6 641.5,448.7 641.8,445.9 642.2,443.1 642.5,440.5 642.9,437.7 643.2,435.0 643.5,432.2 643.9,429.5 644.2,426.8 644.6,424.3 644.9,422.0 645.4,418.9 645.9,416.0 646.4,413.2 646.9,410.5 647.4,407.8 647.9,405.0 648.4,401.9 648.9,398.6 649.4,395.2 649.9,391.8 650.4,388.4 650.9,385.2 651.4,382.4 651.9,379.9 652.4,378.0 653.4,374.9 654.3,372.2 655.2,370.2 656.2,369.4 657.0,370.0 657.8,371.9 658.6,374.7 659.4,378.3 660.2,382.5 660.4,383.8 660.6,385.4 660.8,387.3 661.0,389.6 661.2,392.1 661.4,394.9 661.6,397.9 661.7,401.2 661.9,404.6 662.1,408.1 662.3,411.8 662.5,415.6 662.7,419.5 662.9,423.4 663.1,427.4 663.2,429.7 663.3,432.0 663.4,434.5 663.5,437.1 663.6,439.8 663.7,442.6 663.8,445.6 664.0,448.6 664.1,451.7 664.2,454.9 664.3,458.3 664.4,461.7 664.5,465.2 664.6,468.7 664.7,472.4 664.8,474.7 664.8,477.0 664.9,479.3 665.0,481.7 665.0,484.2 665.1,486.6 665.2,489.2 665.2,491.8 665.3,494.4 665.4,497.1 665.4,499.9 665.5,502.8 665.5,505.7 665.6,508.7 665.7,511.8 665.7,515.0 665.8,518.3 665.9,521.6 665.9,525.1 666.0,528.7 666.1,532.3 666.1,536.1 666.2,540.0 666.2,542.1 666.3,544.4 666.3,546.9 666.3,549.7 666.4,552.6 666.4,555.7 666.4,558.9 666.5,562.3 666.5,565.8 666.5,569.4 666.6,573.2 666.6,577.0 666.6,580.8 666.7,584.8 666.7,588.7 666.7,592.7 666.8,596.7 666.8,600.7 666.8,604.7 666.9,608.6 666.9,612.5 666.9,616.3 666.9,620.1 667.0,623.7 667.0,627.2 667.0,630.7 667.1,634.0 667.1,637.1 667.1,640.1 667.2,642.8 667.2,645.4 667.2,647.8 667.3,650.0 667.3,651.9 667.3,653.5 667.4,654.9 667.4,656.0 667.4,656.8 667.5,657.3 667.5,657.5 667.5,657.3 667.5,656.9 667.6,656.1 667.6,655.1 667.6,653.8 667.6,652.2 667.6,650.4 667.7,648.3 667.7,646.1 667.7,643.6 667.7,641.0 667.7,638.1 667.8,635.1 667.8,632.0 667.8,628.7 667.8,625.3 667.8,621.8 667.9,618.2 667.9,614.5 667.9,610.7 667.9,606.9 667.9,603.0 668.0,599.1 668.0,595.1 668.0,591.2 668.0,587.2 668.0,583.3 668.1,579.4 668.1,575.6 668.1,571.8 668.1,568.1 668.1,564.4 668.2,560.9 668.2,557.5 668.2,554.2 668.2,551.0 668.2,548.0 668.3,545.2 668.3,542.5 668.3,540.0 668.3,536.4 668.4,532.9 668.4,529.4 668.4,525.9 668.4,522.5 668.5,519.1 668.5,515.7 668.5,512.4 668.6,509.1 668.6,505.9 668.6,502.6 668.7,499.5 668.7,496.3 668.7,493.2 668.8,490.2 668.8,487.2 668.8,484.2 668.8,481.3 668.9,478.4 668.9,475.6 668.9,472.8 669.0,470.1 669.0,467.4 669.0,464.8 669.1,462.2 669.1,459.6 669.1,457.1 669.1,454.7 669.2,452.3 669.2,450.0 669.2,446.3 669.3,442.7 669.3,439.2 669.4,435.6 669.4,432.1 669.5,428.7 669.5,425.3 669.6,422.0 669.6,418.7 669.7,415.5 669.7,412.4 669.8,409.4 669.8,406.4 669.9,403.6 669.9,400.8 670.0,398.1 670.0,395.6 670.1,393.1 670.1,390.7 670.2,388.5 670.2,386.4 670.3,384.4 670.3,382.5 670.4,378.6 670.5,375.3 670.6,372.2 670.7,369.5 670.8,366.9 671.0,364.5 671.1,362.0 671.2,359.4 671.3,356.6 671.4,353.5 671.5,350.0 671.6,347.7 671.6,345.1 671.7,342.3 671.8,339.3 671.8,336.2 671.9,333.0 672.0,329.7 672.0,326.4 672.1,323.0 672.1,319.7 672.2,316.4 672.3,313.3 672.3,310.2 672.4,307.3 672.5,304.7 672.5,302.2 672.6,300.0 672.7,296.2 672.8,292.4 673.0,288.9 673.1,285.5 673.2,282.2 673.3,279.1 673.5,276.2 673.6,273.4 673.7,270.8 673.8,268.3 674.0,266.0 674.1,263.9 674.2,262.0 674.5,258.3 674.7,255.0 675.0,252.0 675.3,249.4 675.5,246.9 675.8,244.5 676.1,242.1 676.3,239.6 676.6,237.0 676.9,233.9 677.2,230.8 677.5,227.6 677.8,224.5 678.1,221.4 678.4,218.5 678.7,215.7 679.0,213.0 679.4,209.9 679.8,207.0 680.1,204.1 680.5,201.4 680.9,198.8 681.2,196.2 681.6,193.6 682.0,191.0 682.4,187.9 682.9,184.7 683.3,181.5 683.7,178.4 684.1,175.6 684.6,173.0 685.0,171.0 686.0,167.4 687.0,164.5 688.0,162.0 689.0,159.6 690.0,157.4 691.0,155.5 692.0,154.0 693.0,152.8 694.0,151.7 695.0,150.7 696.0,149.9 697.0,149.2 698.0,148.6 699.0,148.1 700.0,147.6 701.0,147.2 702.0,146.8 703.0,146.4 704.0,146.1 705.0,145.8 706.0,145.6 707.0,145.4 708.0,145.2 709.0,145.0 710.0,144.8 711.0,144.7 712.0,144.5 713.0,144.4 714.0,144.3 715.0,144.1 716.0,144.0 717.0,143.9 718.0,143.8 719.0,143.6 720.0,143.5 721.0,143.4 722.0,143.3 723.0,143.2 724.0,143.1 725.0,143.0 726.0,142.9 727.0,142.8 728.0,142.8 729.0,142.7 730.0,142.6 731.0,142.5 732.0,142.5 733.0,142.4 734.0,142.3 735.0,142.3 736.0,142.2 737.0,142.1 738.0,142.1 739.0,142.0 740.0,142.0 741.0,141.9 742.0,141.9 743.0,141.8 744.0,141.8 745.0,141.7 746.0,141.7 747.0,141.6 748.0,141.6 749.0,141.5 750.0,141.5 751.0,141.4 752.0,141.4 753.0,141.3 754.0,141.3 755.0,141.2 756.0,141.2 757.0,141.1 758.0,141.1 759.0,141.0 760.0,141.0 761.0,141.0 762.0,140.9 763.0,140.8 764.0,140.8 765.0,140.7 766.0,140.7 767.0,140.6 768.0,140.6 769.0,140.5 770.0,140.5 771.0,140.4 772.0,140.4 773.0,140.3 774.0,140.3 775.0,140.2 776.0,140.2 777.0,140.1 778.0,140.1 779.0,140.0 780.0,140.0 781.0,139.9 782.0,139.9 783.0,139.8 784.0,139.8 785.0,139.7 786.0,139.7 787.0,139.6 788.0,139.6 789.0,139.5 790.0,139.5 791.0,139.4 792.0,139.4 793.0,139.3 794.0,139.3 795.0,139.2 796.0,139.2 797.0,139.2 798.0,139.1 799.0,139.1 800.0,139.0 801.0,139.0 802.0,138.9 803.0,138.9 804.0,138.8 805.0,138.8 806.0,138.7 807.0,138.7 808.0,138.7 809.0,138.6 810.0,138.6 811.0,138.5 812.0,138.5 813.0,138.4 814.0,138.4 815.0,138.4 816.0,138.3 817.0,138.3 818.0,138.3 819.0,138.2 820.0,138.2 821.0,138.1 822.0,138.1 823.0,138.1 824.0,138.0 825.0,138.0 826.0,138.0 827.0,137.9 828.0,137.9 829.0,137.9 830.0,137.8 831.0,137.8 832.0,137.8 833.0,137.7 834.0,137.7 834.9,137.7 835.9,137.6 836.9,137.6 837.9,137.6 838.9,137.5 839.9,137.5 840.9,137.5 841.9,137.5 842.9,137.4 843.9,137.4 844.9,137.4 845.9,137.3 846.9,137.3 847.9,137.3 848.9,137.2 849.9,137.2 850.9,137.2 851.9,137.1 852.8,137.1 853.8,137.1 854.8,137.1 855.8,137.0 856.8,137.0 857.8,137.0 858.8,136.9 859.8,136.9 860.8,136.9 861.8,136.9 862.8,136.8 863.8,136.8 864.8,136.8 865.8,136.8 866.8,136.7 867.8,136.7 868.8,136.7 869.8,136.6 870.8,136.6 871.7,136.6 872.7,136.6 873.7,136.5 874.7,136.5 875.7,136.5 876.7,136.5 877.7,136.4 878.7,136.4 879.7,136.4 880.7,136.4 881.7,136.3 882.7,136.3 883.7,136.3 884.7,136.3 885.7,136.3 886.7,136.2 887.7,136.2 888.7,136.2 889.7,136.2 890.6,136.1 891.6,136.1 892.6,136.1 893.6,136.1 894.6,136.0 895.6,136.0 896.6,136.0 897.6,136.0 898.6,136.0 899.6,135.9 900.6,135.9 901.6,135.9 902.6,135.9 903.6,135.9 904.6,135.8 905.6,135.8 906.6,135.8 907.6,135.8 908.5,135.8 909.5,135.7 910.5,135.7 911.5,135.7 912.5,135.7 913.5,135.7 914.5,135.7 915.5,135.6 916.5,135.6 917.5,135.6 918.5,135.6 919.5,135.6 920.5,135.5 921.5,135.5 922.5,135.5 923.5,135.5 924.5,135.5 925.5,135.5 926.5,135.5 927.5,135.4 928.5,135.4 929.5,135.4 930.5,135.4 931.5,135.4 932.5,135.4 933.5,135.3 934.5,135.3 935.5,135.3 936.5,135.3 937.5,135.3 938.5,135.3 939.5,135.3 940.5,135.2 941.5,135.2 942.5,135.2 943.5,135.2 944.5,135.2 945.5,135.2 946.5,135.2 947.5,135.1 948.5,135.1 949.5,135.1 950.5,135.1 951.5,135.1 952.5,135.1 953.5,135.1 954.5,135.1 955.5,135.0 956.5,135.0 957.5,135.0 958.5,135.0 959.5,135.0 960.5,135.0 961.5,135.0 962.5,135.0 963.5,135.0 964.5,134.9 965.5,134.9 966.5,134.9 967.5,134.9 968.5,134.9 969.5,134.9 970.5,134.9 971.5,134.9 972.5,134.8 973.5,134.8 974.5,134.8 975.5,134.8 976.5,134.8 977.5,134.8 978.5,134.8 979.5,134.8 980.5,134.8 981.5,134.7 982.5,134.7 983.5,134.7 984.5,134.7 985.5,134.7 986.5,134.7 987.5,134.7 988.5,134.7 989.5,134.6 990.5,134.6 991.5,134.6 992.5,134.6 993.5,134.6 994.5,134.6 995.5,134.6 996.5,134.6 997.5,134.6 998.5,134.5 999.5,134.5 1000.5,134.5 1001.5,134.5 1002.5,134.5 1003.5,134.5 1004.5,134.5 1005.5,134.5 1006.5,134.4 1007.5,134.4 1008.5,134.4 1009.5,134.4" fill="none" stroke="#40f040" stroke-width="1"/>
<polygon points="78,127 78,140.5 88,133.7" fill="#0e9c9e"/>
<polygon points="1020,127 1020,140.5 1009.5,133.7" fill="#0e9c9e"/>
<polygon points="1020,419 1020,432 1012,425.5" fill="#e070f8"/>
<polyline points="1004,139 1009.5,133.5 1016,140" fill="none" stroke="#9c650f"/>
<line x1="1009.5" y1="134" x2="1009.5" y2="153" stroke="#40f040"/>
<polyline points="1004,656 1009.5,650.5 1015.5,656.5" fill="none" stroke="#0e9c9e"/>
<line x1="1009.5" y1="650.5" x2="1009.5" y2="676" stroke="#0e9c9e"/>
<polyline points="1004,722.5 1009.5,717.5 1015.5,722.5" fill="none" stroke="#e070f8"/>
<line x1="1009.5" y1="717.5" x2="1009.5" y2="735.5" stroke="#e070f8"/>
</g>
<g shape-rendering="crispEdges" stroke-width="1">
<polygon points="548.5,471.0 539.5,486.0 557.5,486.0" fill="none" stroke="#9c650f"/>
<text x="549.7" y="506.5" fill="#9c650f" font-size="16" text-anchor="middle">1</text>
<polygon points="452.5,471.5 443.5,486.5 461.5,486.5" fill="none" stroke="#9c650f"/>
<text x="453.7" y="507.0" fill="#9c650f" font-size="16" text-anchor="middle">2</text>
<polygon points="644.5,484.5 635.5,499.5 653.5,499.5" fill="none" stroke="#9c650f"/>
<text x="645.7" y="520.0" fill="#9c650f" font-size="16" text-anchor="middle">3</text>
<polygon points="466.5,394.5 457.5,379.5 475.5,379.5" fill="none" stroke="#9c650f"/>
<text x="467.3" y="375.0" fill="#9c650f" font-size="16" text-anchor="middle">8</text>
<polygon points="548.5,138.5 539.5,153.5 557.5,153.5" fill="none" stroke="#0e9c9e"/>
<text x="549.7" y="174.0" fill="#0e9c9e" font-size="16" text-anchor="middle">1</text>
<polygon points="452.5,139.5 443.5,154.5 461.5,154.5" fill="none" stroke="#0e9c9e"/>
<text x="453.7" y="175.0" fill="#0e9c9e" font-size="16" text-anchor="middle">2</text>
<polygon points="644.5,139.5 635.5,154.5 653.5,154.5" fill="none" stroke="#0e9c9e"/>
<text x="645.7" y="175.0" fill="#0e9c9e" font-size="16" text-anchor="middle">3</text>
<polygon points="125.5,712.0 116.5,727.0 134.5,727.0" fill="none" stroke="#0e9c9e"/>
<text x="126.5" y="746.0" fill="#0e9c9e" font-size="15" text-anchor="middle">4</text>
<polygon points="971.5,650.0 962.5,635.0 980.5,635.0" fill="none" stroke="#0e9c9e"/>
<text x="972.3" y="630.5" fill="#0e9c9e" font-size="16" text-anchor="middle">5</text>
<polygon points="548.5,199.5 539.5,214.5 557.5,214.5" fill="none" stroke="#e070f8"/>
<text x="549.7" y="235.0" fill="#e070f8" font-size="16" text-anchor="middle">1</text>
<polygon points="452.5,247.5 443.5,262.5 461.5,262.5" fill="none" stroke="#e070f8"/>
<text x="453.7" y="283.0" fill="#e070f8" font-size="16" text-anchor="middle">2</text>
<polygon points="644.5,237.5 635.5,252.5 653.5,252.5" fill="none" stroke="#e070f8"/>
<text x="645.7" y="273.0" fill="#e070f8" font-size="16" text-anchor="middle">3</text>
<polygon points="578.5,197.5 569.5,182.5 587.5,182.5" fill="none" stroke="#e070f8"/>
<text x="579.3" y="178.0" fill="#e070f8" font-size="16" text-anchor="middle">8</text>
<polygon points="548.5,559.5 539.5,574.5 557.5,574.5" fill="none" stroke="#40f040"/>
<text x="549.7" y="595.0" fill="#40f040" font-size="16" text-anchor="middle">1</text>
<polygon points="452.5,455.5 443.5,470.5 461.5,470.5" fill="none" stroke="#40f040"/>
<text x="453.7" y="491.0" fill="#40f040" font-size="16" text-anchor="middle">2</text>
<polygon points="644.5,422.0 635.5,437.0 653.5,437.0" fill="none" stroke="#40f040"/>
<text x="645.7" y="457.5" fill="#40f040" font-size="16" text-anchor="middle">3</text>
<polygon points="466.5,393.5 457.5,378.5 475.5,378.5" fill="none" stroke="#40f040"/>
<text x="467.3" y="374.0" fill="#40f040" font-size="16" text-anchor="middle">8</text>
</g>
<g fill="#9c650f">
<text x="731.3" y="181">1:</text>
<text x="822.6" y="181" text-anchor="end">37.000</text>
<text x="832" y="181">GHz</text>
<text x="972" y="181" text-anchor="end">-28.91 dB</text>
</g>
<g fill="#9c650f">
<text x="731.3" y="201">2:</text>
<text x="822.6" y="201" text-anchor="end">36.500</text>
<text x="832" y="201">GHz</text>
<text x="972" y="201" text-anchor="end">-28.90 dB</text>
</g>
<g fill="#9c650f">
<text x="731.3" y="221">3:</text>
<text x="822.6" y="221" text-anchor="end">37.500</text>
<text x="832" y="221">GHz</text>
<text x="972" y="221" text-anchor="end">-30.08 dB</text>
</g>
<g fill="#9c650f">
<text x="731.3" y="241">8:</text>
<text x="822.6" y="241" text-anchor="end">36.574</text>
<text x="832" y="241">GHz</text>
<text x="972" y="241" text-anchor="end">-22.42 dB</text>
</g>
<g fill="#0e9c9e">
<text x="731.3" y="261">1:</text>
<text x="822.6" y="261" text-anchor="end">37.000</text>
<text x="832" y="261">GHz</text>
<text x="972" y="261" text-anchor="end">-0.84 dB</text>
</g>
<g fill="#0e9c9e">
<text x="731.3" y="281">2:</text>
<text x="822.6" y="281" text-anchor="end">36.500</text>
<text x="832" y="281">GHz</text>
<text x="972" y="281" text-anchor="end">-1.04 dB</text>
</g>
<g fill="#0e9c9e">
<text x="731.3" y="301">3:</text>
<text x="822.6" y="301" text-anchor="end">37.500</text>
<text x="832" y="301">GHz</text>
<text x="972" y="301" text-anchor="end">-1.00 dB</text>
</g>
<g fill="#0e9c9e">
<text x="731.3" y="321">4:</text>
<text x="822.6" y="321" text-anchor="end">34.800</text>
<text x="832" y="321">GHz</text>
<text x="972" y="321" text-anchor="end">-99.07 dB</text>
</g>
<g fill="#0e9c9e">
<text x="718.5" y="340" font-size="13">&gt;</text>
<text x="731.3" y="341">5:</text>
<text x="822.6" y="341" text-anchor="end">39.200</text>
<text x="832" y="341">GHz</text>
<text x="972" y="341" text-anchor="end">-88.59 dB</text>
</g>
<g fill="#e070f8">
<text x="731.3" y="361">1:</text>
<text x="822.6" y="361" text-anchor="end">37.000</text>
<text x="832" y="361">GHz</text>
<text x="972" y="361" text-anchor="end">-0.84 dB</text>
</g>
<g fill="#e070f8">
<text x="731.3" y="381">2:</text>
<text x="822.6" y="381" text-anchor="end">36.500</text>
<text x="832" y="381">GHz</text>
<text x="972" y="381" text-anchor="end">-1.04 dB</text>
</g>
<g fill="#e070f8">
<text x="731.3" y="401">3:</text>
<text x="822.6" y="401" text-anchor="end">37.500</text>
<text x="832" y="401">GHz</text>
<text x="972" y="401" text-anchor="end">-1.00 dB</text>
</g>
<g fill="#e070f8">
<text x="731.3" y="421">8:</text>
<text x="822.6" y="421" text-anchor="end">37.156</text>
<text x="832" y="421">GHz</text>
<text x="972" y="421" text-anchor="end">-0.83 dB</text>
</g>
<g fill="#40f040">
<text x="731.3" y="441">1:</text>
<text x="822.6" y="441" text-anchor="end">37.000</text>
<text x="832" y="441">GHz</text>
<text x="972" y="441" text-anchor="end">-36.54 dB</text>
</g>
<g fill="#40f040">
<text x="731.3" y="461">2:</text>
<text x="822.6" y="461" text-anchor="end">36.500</text>
<text x="832" y="461">GHz</text>
<text x="972" y="461" text-anchor="end">-27.55 dB</text>
</g>
<g fill="#40f040">
<text x="731.3" y="481">3:</text>
<text x="822.6" y="481" text-anchor="end">37.500</text>
<text x="832" y="481">GHz</text>
<text x="972" y="481" text-anchor="end">-24.71 dB</text>
</g>
<g fill="#40f040">
<text x="731.3" y="501">8:</text>
<text x="822.6" y="501" text-anchor="end">36.574</text>
<text x="832" y="501">GHz</text>
<text x="972" y="501" text-anchor="end">-22.25 dB</text>
</g>
<text x="87.0" y="101.0" fill="#9c650f" xml:space="preserve">Tr</text><text x="110.0" y="101.0" fill="#9c650f" xml:space="preserve">1</text><text x="130.0" y="101.0" fill="#9c650f" xml:space="preserve">S11</text><text x="164.0" y="101.0" fill="#9c650f" xml:space="preserve">LogM</text><text x="207.3" y="101.0" fill="#9c650f" xml:space="preserve">5.000dB/</text><text x="279.5" y="101.0" fill="#9c650f" xml:space="preserve">0.00dB</text>
<text x="87.0" y="127.0" fill="#e070f8" xml:space="preserve">Tr</text><text x="110.0" y="127.0" fill="#e070f8" xml:space="preserve">3</text><text x="130.0" y="127.0" fill="#e070f8" xml:space="preserve">S12</text><text x="164.0" y="127.0" fill="#e070f8" xml:space="preserve">LogM</text><text x="207.3" y="127.0" fill="#e070f8" xml:space="preserve">0.250dB/</text><text x="279.5" y="127.0" fill="#e070f8" xml:space="preserve">-1.80dB</text>
<rect x="553" y="85.5" width="33" height="19" fill="#0e9c9e"/>
<text x="555.0" y="101.0" fill="#000" xml:space="preserve">Tr</text><text x="577.0" y="101.0" fill="#000" xml:space="preserve">2</text><text x="597.0" y="101.0" fill="#0e9c9e" xml:space="preserve">S21</text><text x="629.5" y="101.0" fill="#0e9c9e" xml:space="preserve">LogM</text><text x="674.3" y="101.0" fill="#0e9c9e" xml:space="preserve">10.00dB/</text><text x="746.5" y="101.0" fill="#0e9c9e" xml:space="preserve">0.00dB</text>
<text x="555.0" y="127.0" fill="#40f040" xml:space="preserve">Tr</text><text x="577.0" y="127.0" fill="#40f040" xml:space="preserve">4</text><text x="597.0" y="127.0" fill="#40f040" xml:space="preserve">S22</text><text x="629.5" y="127.0" fill="#40f040" xml:space="preserve">LogM</text><text x="674.3" y="127.0" fill="#40f040" xml:space="preserve">5.000dB/</text><text x="746.5" y="127.0" fill="#40f040" xml:space="preserve">0.00dB</text>
<rect x="16" y="723" width="27" height="20" fill="#c8c8c8"/>
<text x="29.5" y="739" fill="#000" text-anchor="middle">1</text>
<text x="87.0" y="742.0" fill="#000" xml:space="preserve">&gt;Ch1</text><text x="137.5" y="742.0" fill="#000" xml:space="preserve">Start</text><text x="184.0" y="742.0" fill="#000" xml:space="preserve">34.6000 GHz</text>
<g shape-rendering="crispEdges"><rect x="285" y="734" width="22" height="2" fill="#9c650f"/><rect x="312" y="734" width="22" height="2" fill="#0e9c9e"/><rect x="338" y="734" width="22" height="2" fill="#e070f8"/><rect x="365" y="734" width="22" height="2" fill="#40f040"/></g>
<text x="507.0" y="742.0" fill="#000" xml:space="preserve">RF</text><text x="545.0" y="742.0" fill="#000" xml:space="preserve">0.00 dBm</text>
<text x="871.0" y="742.0" fill="#000" xml:space="preserve">Stop</text><text x="913.0" y="742.0" fill="#000" xml:space="preserve">39.4000 GHz</text>
</svg>
<div id="panel" class="abs">
<div id="pbody"></div><div id="tabmain"></div>
<div class="tab" style="top:105px;height:63px;border-top-left-radius:7px;border-left:1px solid #484848"></div>
<div class="tab" style="top:168px;height:64px"></div>
<div class="tab" style="top:232px;height:479px"></div>
<div class="tabt" style="top:64px;color:#fff;letter-spacing:-.17px">Main</div>
<div class="tabt" style="top:117px"><span style="letter-spacing:-.26px">Electrical</span><br><span style="letter-spacing:-.5px">Delay</span></div>
<div class="tabt" style="top:190px;letter-spacing:-.07px">Constants</div>
<div id="phead"><div class="t">Scale</div><div id="pclose"><svg width="23" height="22" viewBox="0 0 23 22"><path d="M7.2 7.5 L16 15.6 M16 7.5 L7.2 15.6" stroke="#fff" stroke-width="2.3"/></svg></div></div>
<div id="focus"></div>
<div class="pb" style="top:48px"><div class="t" style="top:26px;letter-spacing:-0.20px">Autoscale</div></div>
<div class="pb" style="top:131px"><div class="t" style="top:16px;letter-spacing:-0.20px">Autoscale<br><span style="letter-spacing:0">All</span></div></div>
<div class="pb" style="top:214px"><div class="t" style="top:9px;letter-spacing:0.12px">Y-Axis Divisions</div><div class="s">10</div></div>
<div class="pb" style="top:297px"><div class="t" style="top:9px;letter-spacing:-0.36px">Scale</div><div class="s">10 dB</div></div>
<div class="pb" style="top:381px"><div class="t" style="top:9px;letter-spacing:-0.33px">Reference Level</div><div class="s">0 dB</div></div>
<div class="pb" style="top:464px"><div class="t" style="top:9px;letter-spacing:-0.06px">Reference Position</div><div class="s">10 Div</div></div>
<div class="pb" style="top:547px"><div class="t" style="top:9px;letter-spacing:0.00px">Grid Setup...</div><div class="s">Linear Y-Axis</div></div>
<div class="pb" style="top:631px"><div class="t" style="top:9px;letter-spacing:-0.12px">Scale Coupling...</div><div class="s">Off</div></div>
</div>
<svg class="abs" style="left:0;top:0;pointer-events:none" width="1280" height="801" viewBox="0 0 1280 801"><text transform="scale(1.075 1)" x="151.1 205.6 260.2 315.3 338.5 379.4 418.9 462.4 504.5 562.5 588.7 623.9 657.1 701.4 754.1 793.0 832.0 875.2 902.5 928.8 970.1" y="362" font-family="'Liberation Serif',serif" font-weight="bold" font-size="72.8" fill="#000" fill-opacity=".105">www.xahxmicrowave.com</text></svg>
<div class="sb" style="left:4px;width:44px">Tr 2</div>
<div class="sb" style="left:55px;width:50px">Ch 1</div>
<div class="sb" style="left:113px;width:57px">IntTrig</div>
<div class="sb" style="left:177px;width:50px"><span style="padding-left:7px">Swp *</span></div>
<div class="sb" style="left:235px;width:73px">BW=100</div>
<div class="sb" style="left:315px;width:79px">C&#8710; 2-Port</div>
<div class="sb d" style="left:403px;width:49px">SrcCal</div>
<div class="sb d" style="left:460px;width:35px">Fix</div>
<div class="sb d" style="left:502px;width:45px">Pulse</div>
<div class="sb" style="left:555px;width:718px"></div>
<div id="bottom" class="abs"></div><div id="blk" class="abs"></div>
</body></html>
